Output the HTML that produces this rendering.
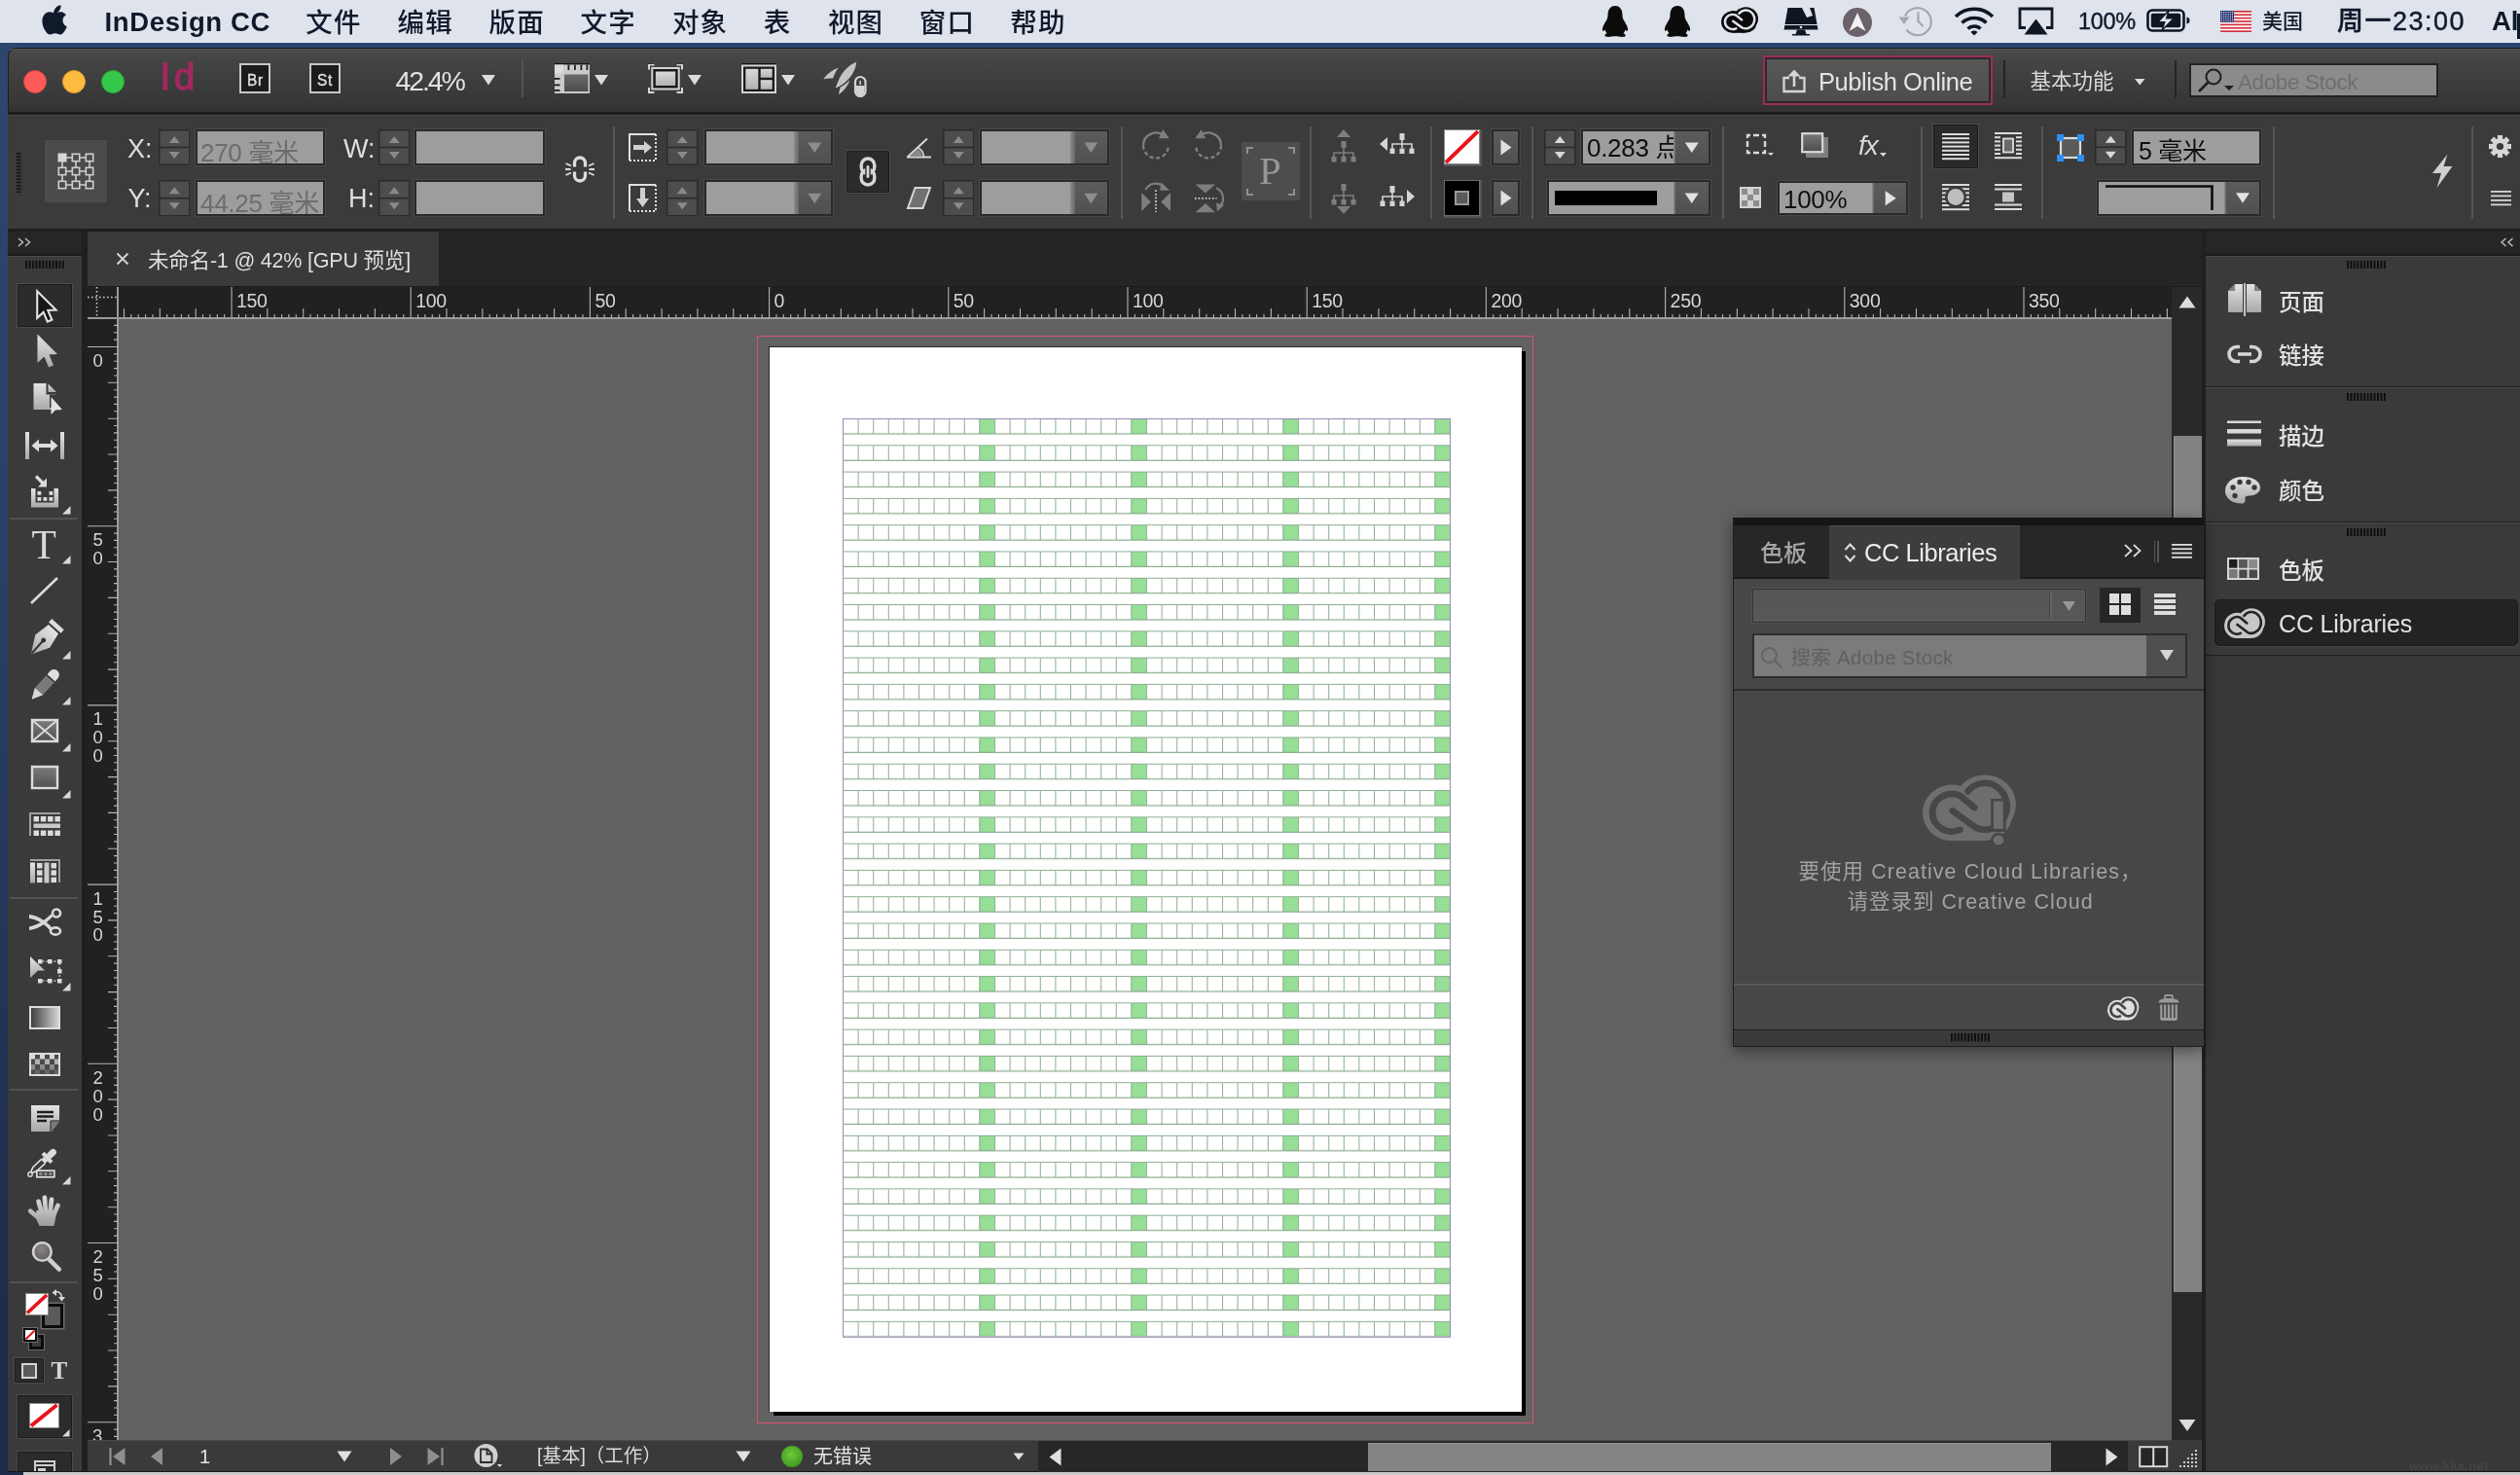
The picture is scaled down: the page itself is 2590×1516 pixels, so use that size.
<!DOCTYPE html>
<html lang="zh"><head><meta charset="utf-8"><title>InDesign CC</title>
<style>
html,body{margin:0;padding:0;}
body{width:2590px;height:1516px;overflow:hidden;position:relative;background:#2e4872;font-family:"Liberation Sans","Noto Sans CJK SC",sans-serif;}
div,svg{position:absolute;box-sizing:border-box;}
.t{white-space:nowrap;line-height:1;}
</style></head><body><div id="root" style="left:0;top:0;width:2590px;height:1516px;will-change:transform;">
<div style="left:0px;top:0px;width:2590px;height:44px;background:#dfe3ec;"></div>
<div style="left:0px;top:44px;width:2590px;height:6px;background:#2c446d;"></div>
<div style="left:0px;top:44px;width:24px;height:1472px;background:linear-gradient(#2d4670,#2a426b 30%,#1d2c49 90%);"></div>
<div style="left:24px;top:1513.3px;width:2566px;height:2.7px;background:#c9c9c9;"></div>
<div style="left:8px;top:49px;width:2592px;height:1464.3px;background:#3a3a3a;border-radius:9px 0 0 0;"></div>
<div style="left:8px;top:49px;width:2592px;height:68px;background:linear-gradient(#4c4c4c,#454545 15%,#363636 85%,#323232);border-radius:9px 0 0 0;border-top:1px solid #1d1d1d;border-left:1px solid #1d1d1d;"></div>
<div style="left:9px;top:50px;width:2591px;height:2px;background:linear-gradient(#5a5a5a,#4c4c4c);border-radius:9px 0 0 0;opacity:.6"></div>
<div style="left:8px;top:115px;width:2592px;height:3px;background:#1c1c1c;"></div>
<div style="left:8px;top:118px;width:2592px;height:1px;background:#4a4a4a;"></div>
<div style="left:8px;top:119px;width:2592px;height:117px;background:#3b3b3b;"></div>
<div style="left:8px;top:235px;width:2592px;height:3px;background:#1e1e1e;"></div>
<div style="left:8px;top:238px;width:2592px;height:57px;background:#282828;"></div>
<svg style="left:42px;top:4px;" width="27" height="33" viewBox="0 0 27 33"><path d="M18.6 7.3c1.3-1.6 2.2-3.8 1.9-6C18.600 1.400 16.400 2.600 15.100 4.200c-1.200 1.400-2.300 3.700-2 5.800 2.100.2 4.200-1.100 5.500-2.700zM22.500 17.300c0-4 3.300-5.900 3.400-6-1.900-2.700-4.700-3.100-5.700-3.100-2.400-.2-4.700 1.400-6 1.400-1.200 0-3.100-1.400-5.100-1.300-2.600 0-5 1.500-6.400 3.900-2.700 4.700-.7 11.700 2 15.500 1.300 1.900 2.800 4 4.900 3.900 2-.1 2.700-1.300 5.100-1.300 2.400 0 3 1.300 5.100 1.200 2.100 0 3.500-1.900 4.800-3.800 1.500-2.200 2.100-4.300 2.200-4.400-.1 0-4.200-1.600-4.300-6z" fill="#101a2b"/></svg>
<div class="t" style="left:107.5px;top:8.5px;font-size:27.5px;color:#101a2b;font-weight:bold;letter-spacing:0.65px;">InDesign CC</div>
<div class="t" style="left:314.2px;top:9.5px;font-size:27.5px;color:#101a2b;font-weight:500;letter-spacing:1.2px;">文件</div>
<div class="t" style="left:408.5px;top:9.5px;font-size:27.5px;color:#101a2b;font-weight:500;letter-spacing:1.2px;">编辑</div>
<div class="t" style="left:502.5px;top:9.5px;font-size:27.5px;color:#101a2b;font-weight:500;letter-spacing:1.2px;">版面</div>
<div class="t" style="left:596.5px;top:9.5px;font-size:27.5px;color:#101a2b;font-weight:500;letter-spacing:1.2px;">文字</div>
<div class="t" style="left:690.9px;top:9.5px;font-size:27.5px;color:#101a2b;font-weight:500;letter-spacing:1.2px;">对象</div>
<div class="t" style="left:784.8px;top:9.5px;font-size:27.5px;color:#101a2b;font-weight:500;letter-spacing:1.2px;">表</div>
<div class="t" style="left:850.9px;top:9.5px;font-size:27.5px;color:#101a2b;font-weight:500;letter-spacing:1.2px;">视图</div>
<div class="t" style="left:944.8px;top:9.5px;font-size:27.5px;color:#101a2b;font-weight:500;letter-spacing:1.2px;">窗口</div>
<div class="t" style="left:1038.2px;top:9.5px;font-size:27.5px;color:#101a2b;font-weight:500;letter-spacing:1.2px;">帮助</div>
<svg style="left:1646px;top:5px;" width="28" height="34" viewBox="0 0 28 34"><path d="M14 1C8.500 1 6.500 5.500 6.500 10.500c0 2-.3 3.500-1.500 5.500C3 19.500 .5 23 1 26c.3 1.500 1.500 1 2.500-.5.300 1.500 1 2.800 2 3.800C4 30 3 31 3.500 32c.5 1 4 1.200 7 .5 1.200-.3 2.300-.3 3.500-.3s2.300 0 3.500.3c3 .7 6.500.5 7-.5.500-1-.500-2-2-2.700 1-1 1.700-2.300 2-3.800 1 1.500 2.200 2 2.500.5.500-3-2-6.500-4-10-1.200-2-1.500-3.500-1.500-5.500C21.500 5.500 19.500 1 14 1z" fill="#0b0b0b"/></svg>
<svg style="left:1710px;top:5px;" width="28" height="34" viewBox="0 0 28 34"><path d="M14 1C8.500 1 6.500 5.500 6.500 10.500c0 2-.3 3.500-1.500 5.500C3 19.500 .5 23 1 26c.3 1.500 1.500 1 2.500-.5.300 1.500 1 2.800 2 3.800C4 30 3 31 3.500 32c.5 1 4 1.200 7 .5 1.200-.3 2.300-.3 3.500-.3s2.300 0 3.500.3c3 .7 6.500.5 7-.5.500-1-.500-2-2-2.700 1-1 1.700-2.300 2-3.800 1 1.500 2.200 2 2.500.5.500-3-2-6.500-4-10-1.200-2-1.500-3.500-1.500-5.500C21.500 5.500 19.500 1 14 1z" fill="#0b0b0b"/></svg>
<svg style="left:1769px;top:7.2px;overflow:visible;" width="38" height="26.8" viewBox="0 0 42 31.200" preserveAspectRatio="none"><g fill="#0b0b0b"><circle cx="13.200" cy="18" r="13.200"/><circle cx="28" cy="14.200" r="14"/><ellipse cx="27" cy="20" rx="13" ry="11.200"/><rect x="13.200" y="18" width="13.800" height="13.200"/></g><g fill="none" stroke="#dfe3ec" stroke-width="2.8" stroke-linecap="round" stroke-linejoin="round"><path d="M20.400 7.930A9.900 11 0 1 1 23.800 24.970L13.500 17.100"/><path d="M23.300 15.600L16.800 9.970A8.800 8.800 0 1 0 16.800 26.030"/></g></svg>
<svg style="left:1832px;top:7px;" width="38" height="30" viewBox="0 0 38 30"><path d="M5.500 1H32.500L36.500 23.500H1.500Z" fill="#0f1722"/><path d="M20 1H28L31 9 25 11Z" fill="#dfe3ec"/><path d="M1.500 18.500H36.500" stroke="#dfe3ec" stroke-width="1"/><circle cx="19" cy="21" r="1.300" fill="#dfe3ec"/><path d="M15 23.500H23L24.500 28H28V29.500H10V28H13.500Z" fill="#0f1722"/></svg>
<svg style="left:1893px;top:7px;" width="32" height="32" viewBox="0 0 32 32"><circle cx="16" cy="16" r="15" fill="#6a6268"/><path d="M16 6L24.500 25 16 20 7.500 25Z" fill="#f1f1f1"/></svg>
<svg style="left:1950px;top:4px;" width="36" height="34" viewBox="0 0 36 34"><g fill="none" stroke="#a3a8b0" stroke-width="2.200"><path d="M8 12.500A14 14 0 1 1 9.500 26.500"/><path d="M21.500 9V18L26 22.500" stroke-linecap="round"/></g><path d="M1.500 13.500H12.500L7 21Z" fill="#a3a8b0"/></svg>
<svg style="left:2008px;top:6px;" width="42" height="31" viewBox="0 0 42 31"><g fill="none" stroke="#0f1722" stroke-width="3.600" stroke-linecap="butt"><path d="M2 11A27 27 0 0 1 40 11"/><path d="M8.500 17.500A18 18 0 0 1 33.500 17.500"/><path d="M14.500 23.500A9.500 9.500 0 0 1 27.500 23.500"/></g><path d="M21 30.500L17.500 27A5 5 0 0 1 24.500 27Z" fill="#0f1722"/></svg>
<svg style="left:2074px;top:7px;" width="37" height="30" viewBox="0 0 37 30"><path d="M8 21.500H2V2H35V21.500H29" fill="none" stroke="#0f1722" stroke-width="2.800"/><path d="M18.500 12.500L30.500 28.500H6.500Z" fill="#0f1722"/></svg>
<div class="t" style="left:2136px;top:10.5px;font-size:23.5px;color:#101a2b;letter-spacing:-0.300px;-webkit-text-stroke:0.400px #101a2b;">100%</div>
<svg style="left:2206px;top:9px;" width="47" height="25" viewBox="0 0 47 25"><rect x="1.500" y="1.500" width="37" height="21" rx="4.500" fill="none" stroke="#0f1722" stroke-width="2.600"/><rect x="4.800" y="4.800" width="30.400" height="14.400" rx="2" fill="#0f1722"/><path d="M41.500 8.500V15.500C44 15 44.500 13.500 44.500 12S44 9 41.500 8.500Z" fill="#0f1722"/><path d="M23 2L12 13.500H19L16 22 28 10H20.500Z" fill="#dfe3ec" stroke="#0f1722" stroke-width="1.200"/></svg>
<svg style="left:2282px;top:11px;" width="32" height="22" viewBox="0 0 32 22"><rect width="32" height="22" fill="#fff"/><rect x="0" y="0" width="32" height="1.69231" fill="#d22f3c"/><rect x="0" y="3.38462" width="32" height="1.69231" fill="#d22f3c"/><rect x="0" y="6.76923" width="32" height="1.69231" fill="#d22f3c"/><rect x="0" y="10.1538" width="32" height="1.69231" fill="#d22f3c"/><rect x="0" y="13.5385" width="32" height="1.69231" fill="#d22f3c"/><rect x="0" y="16.9231" width="32" height="1.69231" fill="#d22f3c"/><rect x="0" y="20.3077" width="32" height="1.69231" fill="#d22f3c"/><rect width="14" height="11.850" fill="#2b3a78"/><rect x="1" y="1" width="1" height="1" fill="#fff"/><rect x="3.2" y="1" width="1" height="1" fill="#fff"/><rect x="5.4" y="1" width="1" height="1" fill="#fff"/><rect x="7.6" y="1" width="1" height="1" fill="#fff"/><rect x="9.8" y="1" width="1" height="1" fill="#fff"/><rect x="12" y="1" width="1" height="1" fill="#fff"/><rect x="1" y="3.2" width="1" height="1" fill="#fff"/><rect x="3.2" y="3.2" width="1" height="1" fill="#fff"/><rect x="5.4" y="3.2" width="1" height="1" fill="#fff"/><rect x="7.6" y="3.2" width="1" height="1" fill="#fff"/><rect x="9.8" y="3.2" width="1" height="1" fill="#fff"/><rect x="12" y="3.2" width="1" height="1" fill="#fff"/><rect x="1" y="5.4" width="1" height="1" fill="#fff"/><rect x="3.2" y="5.4" width="1" height="1" fill="#fff"/><rect x="5.4" y="5.4" width="1" height="1" fill="#fff"/><rect x="7.6" y="5.4" width="1" height="1" fill="#fff"/><rect x="9.8" y="5.4" width="1" height="1" fill="#fff"/><rect x="12" y="5.4" width="1" height="1" fill="#fff"/><rect x="1" y="7.6" width="1" height="1" fill="#fff"/><rect x="3.2" y="7.6" width="1" height="1" fill="#fff"/><rect x="5.4" y="7.6" width="1" height="1" fill="#fff"/><rect x="7.6" y="7.6" width="1" height="1" fill="#fff"/><rect x="9.8" y="7.6" width="1" height="1" fill="#fff"/><rect x="12" y="7.6" width="1" height="1" fill="#fff"/><rect x="1" y="9.8" width="1" height="1" fill="#fff"/><rect x="3.2" y="9.8" width="1" height="1" fill="#fff"/><rect x="5.4" y="9.8" width="1" height="1" fill="#fff"/><rect x="7.6" y="9.8" width="1" height="1" fill="#fff"/><rect x="9.8" y="9.8" width="1" height="1" fill="#fff"/><rect x="12" y="9.8" width="1" height="1" fill="#fff"/></svg>
<div class="t" style="left:2325px;top:11px;font-size:21px;color:#101a2b;font-weight:500;">美国</div>
<div class="t" style="left:2402px;top:9px;font-size:27px;color:#101a2b;font-weight:500;letter-spacing:1.500px;-webkit-text-stroke:0.400px #101a2b;">周一23:00</div>
<div class="t" style="left:2561px;top:8px;font-size:27.5px;color:#101a2b;font-weight:bold;">Al</div>
<div style="left:2587px;top:14px;width:3px;height:26px;background:#101a2b;"></div>
<div style="left:24px;top:72px;width:24px;height:24px;background:#fc5b57;border-radius:50%;border:1px solid #e0443e;"></div>
<div style="left:64px;top:72px;width:24px;height:24px;background:#fdbc40;border-radius:50%;border:1px solid #dfa023;"></div>
<div style="left:104px;top:72px;width:24px;height:24px;background:#34c84a;border-radius:50%;border:1px solid #27aa35;"></div>
<div class="t" style="left:164.6px;top:60px;font-size:38px;color:#a3285f;-webkit-text-stroke:1.300px #a3285f;letter-spacing:3.900px;">Id</div>
<div style="left:246px;top:65px;width:32px;height:31px;background:#1c1c1c;border:2px solid #c9c9c9;"></div>
<div class="t" style="left:253.8px;top:73.5px;font-size:16.5px;color:#dcdcdc;-webkit-text-stroke:0.500px #dcdcdc;letter-spacing:0.900px;transform-origin:0 0;transform:scaleX(0.930);">Br</div>
<div style="left:318px;top:65px;width:32px;height:31px;background:#1c1c1c;border:2px solid #c9c9c9;"></div>
<div class="t" style="left:325.8px;top:73.5px;font-size:16.5px;color:#dcdcdc;-webkit-text-stroke:0.500px #dcdcdc;letter-spacing:0.900px;transform-origin:0 0;transform:scaleX(0.930);">St</div>
<div class="t" style="left:406.5px;top:68.5px;font-size:28.5px;color:#e2e2e2;letter-spacing:-2.100px;">42.4%</div>
<svg style="left:495px;top:77px;" width="14" height="10.5" viewBox="0 0 14 10.5"><path d="M0 0H14 L7 10.5Z" fill="#dcdcdc"/></svg>
<div style="left:536px;top:60px;width:1.5px;height:40px;background:#545454;"></div>
<svg style="left:570px;top:64.5px;" width="36" height="31" viewBox="0 0 36 31"><defs><linearGradient id="gvo" x1="0" y1="0" x2="0" y2="1"><stop offset="0" stop-color="#6b6b6b"/><stop offset="1" stop-color="#4c4c4c"/></linearGradient><linearGradient id="glt" x1="0" y1="0" x2="0" y2="1"><stop offset="0" stop-color="#d9d9d9"/><stop offset="1" stop-color="#b2b2b2"/></linearGradient></defs><rect x="0" y="0" width="36" height="1.500" fill="#161616"/><rect x="0" y="1.500" width="36" height="29.500" fill="#cbcbcb"/><rect x="0" y="1.500" width="9" height="9" fill="#dcdcdc"/><rect x="10" y="11.500" width="24.500" height="17.500" fill="url(#gvo)"/><rect x="13.5" y="1.500" width="1.800" height="5.500" fill="#1c1c1c"/><rect x="20" y="1.500" width="1.800" height="5.500" fill="#1c1c1c"/><rect x="26.5" y="1.500" width="1.800" height="5.500" fill="#1c1c1c"/><rect x="32.5" y="1.500" width="1.800" height="5.500" fill="#1c1c1c"/><rect x="0" y="15" width="5.500" height="1.800" fill="#1c1c1c"/><rect x="0" y="21.5" width="5.500" height="1.800" fill="#1c1c1c"/><rect x="0" y="27" width="5.500" height="1.800" fill="#1c1c1c"/></svg>
<svg style="left:610.5px;top:77px;" width="14" height="10.5" viewBox="0 0 14 10.5"><path d="M0 0H14 L7 10.5Z" fill="#dcdcdc"/></svg>
<svg style="left:666px;top:64.5px;" width="36" height="31" viewBox="0 0 36 31"><path d="M1 6.500V1.500H6.500 M29.500 1.500H35V6.500 M35 25V30H29.500 M6.500 30H1V25" fill="none" stroke="#d6d6d6" stroke-width="2"/><path d="M0 0H6.500 M29.500 0H36" stroke="#161616" stroke-width="1.500"/><rect x="4.300" y="5" width="27.400" height="21.500" fill="#1a1a1a" stroke="#d4d4d4" stroke-width="2"/><rect x="7.800" y="8.500" width="20.400" height="14.500" fill="url(#glt)"/></svg>
<svg style="left:706.5px;top:77px;" width="14" height="10.5" viewBox="0 0 14 10.5"><path d="M0 0H14 L7 10.5Z" fill="#dcdcdc"/></svg>
<svg style="left:762px;top:64.5px;" width="36" height="31" viewBox="0 0 36 31"><rect x="0" y="0" width="36" height="1.500" fill="#161616"/><rect x="1" y="2.500" width="34" height="27.500" fill="#1a1a1a" stroke="#d4d4d4" stroke-width="2"/><rect x="4.300" y="5.800" width="13" height="21" fill="url(#glt)"/><rect x="19.700" y="5.800" width="12" height="9" fill="url(#glt)"/><rect x="19.700" y="17.200" width="12" height="9.600" fill="url(#glt)"/></svg>
<svg style="left:802.5px;top:77px;" width="14" height="10.5" viewBox="0 0 14 10.5"><path d="M0 0H14 L7 10.5Z" fill="#dcdcdc"/></svg>
<svg style="left:846px;top:63px;" width="46" height="38" viewBox="0 0 46 38"><g fill="#c4c4c4"><path d="M34.200 0.800C27 3 18.500 12 15.500 20.500 13.800 25 12.500 27 12.800 27.200 13.200 27.500 17 26 21 23 27.500 18 33.500 10 34.200 0.800Z"/><path d="M15.800 6.800C10 8.500 4 13 0.300 18.500 4 17.500 7.500 17.200 10 17.500 11.500 13.500 13.500 9.500 15.800 6.800Z"/><path d="M27.300 19.300C24.500 22.500 21 25 17.800 26.500 17 29 16.300 31.500 16 34.200 21 30.500 25.500 25.500 27.300 19.300Z"/></g><rect x="33" y="16" width="10.500" height="20" rx="5.250" fill="#3d3d3d" stroke="#d2d2d2" stroke-width="2.200"/><path d="M34 25H42.500V31A4.200 4.200 0 0 1 34 31Z" fill="#d2d2d2"/><path d="M38.200 20V24" stroke="#d2d2d2" stroke-width="1.600"/></svg>
<div style="left:1812px;top:56.5px;width:235.5px;height:51px;border:2px solid #9c2c5c;background:#2b2b2b;padding:0;"></div>
<div style="left:1815px;top:59.5px;width:229.5px;height:45px;background:linear-gradient(#575757,#4d4d4d);border:1px solid #2a2a2a;"></div>
<svg style="left:1831px;top:69.5px;" width="26" height="26" viewBox="0 0 26 26"><path d="M8 10H2.500V24H23.500V10H18" fill="none" stroke="#d6d6d6" stroke-width="2.300"/><path d="M13 19V4" stroke="#d6d6d6" stroke-width="2.600"/><path d="M6.500 8.500L13 1.500 19.500 8.500Z" fill="#d6d6d6"/></svg>
<div class="t" style="left:1869px;top:72px;font-size:25.5px;color:#e3e3e3;letter-spacing:-0.450px;">Publish Online</div>
<div style="left:2059px;top:62px;width:1.5px;height:39px;background:#242424;"></div>
<div class="t" style="left:2086.5px;top:74px;font-size:21.5px;color:#dcdcdc;">基本功能</div>
<svg style="left:2194px;top:81px;" width="10.5" height="6.5" viewBox="0 0 10.5 6.5"><path d="M0 0H10.5 L5.25 6.5Z" fill="#dcdcdc"/></svg>
<div style="left:2235px;top:62px;width:1.5px;height:39px;background:#242424;"></div>
<div style="left:2250px;top:64.5px;width:255.5px;height:35px;background:#8b8b8b;border:2px solid #232323;"></div>
<svg style="left:2258px;top:69px;" width="44" height="28" viewBox="0 0 44 28"><circle cx="17" cy="10" r="7.500" fill="none" stroke="#1e1e1e" stroke-width="2"/><path d="M11.500 15.500L2 25" stroke="#1e1e1e" stroke-width="2.600"/><path d="M28 19H38L33 24Z" fill="#1e1e1e"/></svg>
<div class="t" style="left:2300px;top:74px;font-size:22.5px;color:#6f6f6f;letter-spacing:-0.400px;">Adobe Stock</div>
<svg style="left:17px;top:157px;" width="5" height="41" viewBox="0 0 5 41"><rect x="0" y="0" width="4.500" height="1.600" fill="#121212"/><rect x="0" y="3.3" width="4.500" height="1.600" fill="#121212"/><rect x="0" y="6.6" width="4.500" height="1.600" fill="#121212"/><rect x="0" y="9.9" width="4.500" height="1.600" fill="#121212"/><rect x="0" y="13.2" width="4.500" height="1.600" fill="#121212"/><rect x="0" y="16.5" width="4.500" height="1.600" fill="#121212"/><rect x="0" y="19.8" width="4.500" height="1.600" fill="#121212"/><rect x="0" y="23.1" width="4.500" height="1.600" fill="#121212"/><rect x="0" y="26.4" width="4.500" height="1.600" fill="#121212"/><rect x="0" y="29.7" width="4.500" height="1.600" fill="#121212"/><rect x="0" y="33" width="4.500" height="1.600" fill="#121212"/><rect x="0" y="36.3" width="4.500" height="1.600" fill="#121212"/><rect x="0" y="39.6" width="4.500" height="1.600" fill="#121212"/></svg>
<svg style="left:46px;top:144px;" width="64" height="64" viewBox="0 0 64 64"><rect x="0" y="0" width="64" height="64" fill="#4b4b4b"/><path d="M18 18H46V46H18Z M32 18V46 M18 32H46" fill="none" stroke="#cfcfcf" stroke-width="1.600"/><rect x="13.5" y="13.5" width="9" height="9" fill="#d6d6d6"/><rect x="28.3" y="14.3" width="7.400" height="7.400" fill="#4b4b4b" stroke="#cfcfcf" stroke-width="1.600"/><rect x="42.3" y="14.3" width="7.400" height="7.400" fill="#4b4b4b" stroke="#cfcfcf" stroke-width="1.600"/><rect x="14.3" y="28.3" width="7.400" height="7.400" fill="#4b4b4b" stroke="#cfcfcf" stroke-width="1.600"/><rect x="28.3" y="28.3" width="7.400" height="7.400" fill="#4b4b4b" stroke="#cfcfcf" stroke-width="1.600"/><rect x="42.3" y="28.3" width="7.400" height="7.400" fill="#4b4b4b" stroke="#cfcfcf" stroke-width="1.600"/><rect x="14.3" y="42.3" width="7.400" height="7.400" fill="#4b4b4b" stroke="#cfcfcf" stroke-width="1.600"/><rect x="28.3" y="42.3" width="7.400" height="7.400" fill="#4b4b4b" stroke="#cfcfcf" stroke-width="1.600"/><rect x="42.3" y="42.3" width="7.400" height="7.400" fill="#4b4b4b" stroke="#cfcfcf" stroke-width="1.600"/></svg>
<div class="t" style="left:131px;top:139.5px;font-size:27px;color:#dedede;">X:</div>
<div class="t" style="left:131.5px;top:191px;font-size:27px;color:#dedede;">Y:</div>
<div class="t" style="left:353px;top:139.5px;font-size:27px;color:#dedede;">W:</div>
<div class="t" style="left:358px;top:191px;font-size:27px;color:#dedede;">H:</div>
<div style="left:162.5px;top:133px;width:32.5px;height:37px;"><svg style="left:0px;top:0px;" width="32.5" height="37" viewBox="0 0 32.5 37"><rect x="0" y="0" width="32.5" height="37" fill="#2b2b2b"/><rect x="1.500" y="1.500" width="29.5" height="16.2" fill="#4d4d4d"/><rect x="1.500" y="19.3" width="29.5" height="16.2" fill="#4d4d4d"/><path d="M16.25 7L21.75 14H10.75Z" fill="#8a8a8a"/><path d="M16.25 30L21.75 23H10.75Z" fill="#8a8a8a"/></svg></div>
<div style="left:200.5px;top:133px;width:133.5px;height:37px;background:#9d9d9d;border:2px solid #2a2a2a;box-shadow:0 0 0 1px #484848;overflow:hidden;"><div class="t" style="left:3.5px;top:9px;font-size:26px;color:#6c6c6c;letter-spacing:-0.3px;">270 毫米</div></div>
<div style="left:388.5px;top:133px;width:32.5px;height:37px;"><svg style="left:0px;top:0px;" width="32.5" height="37" viewBox="0 0 32.5 37"><rect x="0" y="0" width="32.5" height="37" fill="#2b2b2b"/><rect x="1.500" y="1.500" width="29.5" height="16.2" fill="#4d4d4d"/><rect x="1.500" y="19.3" width="29.5" height="16.2" fill="#4d4d4d"/><path d="M16.25 7L21.75 14H10.75Z" fill="#8a8a8a"/><path d="M16.25 30L21.75 23H10.75Z" fill="#8a8a8a"/></svg></div>
<div style="left:425.5px;top:133px;width:134.5px;height:37px;background:#9d9d9d;border:2px solid #2a2a2a;box-shadow:0 0 0 1px #484848;overflow:hidden;"></div>
<div style="left:162.5px;top:184.5px;width:32.5px;height:37.5px;"><svg style="left:0px;top:0px;" width="32.5" height="37.5" viewBox="0 0 32.5 37.5"><rect x="0" y="0" width="32.5" height="37.5" fill="#2b2b2b"/><rect x="1.500" y="1.500" width="29.5" height="16.45" fill="#4d4d4d"/><rect x="1.500" y="19.55" width="29.5" height="16.45" fill="#4d4d4d"/><path d="M16.25 7.25L21.75 14.25H10.75Z" fill="#8a8a8a"/><path d="M16.25 30.25L21.75 23.25H10.75Z" fill="#8a8a8a"/></svg></div>
<div style="left:200.5px;top:184.5px;width:133.5px;height:37.5px;background:#9d9d9d;border:2px solid #2a2a2a;box-shadow:0 0 0 1px #484848;overflow:hidden;"><div class="t" style="left:3.5px;top:9px;font-size:26px;color:#6c6c6c;letter-spacing:-0.3px;">44.25 毫米</div></div>
<div style="left:388.5px;top:184.5px;width:32.5px;height:37.5px;"><svg style="left:0px;top:0px;" width="32.5" height="37.5" viewBox="0 0 32.5 37.5"><rect x="0" y="0" width="32.5" height="37.5" fill="#2b2b2b"/><rect x="1.500" y="1.500" width="29.5" height="16.45" fill="#4d4d4d"/><rect x="1.500" y="19.55" width="29.5" height="16.45" fill="#4d4d4d"/><path d="M16.25 7.25L21.75 14.25H10.75Z" fill="#8a8a8a"/><path d="M16.25 30.25L21.75 23.25H10.75Z" fill="#8a8a8a"/></svg></div>
<div style="left:425.5px;top:184.5px;width:134.5px;height:37.5px;background:#9d9d9d;border:2px solid #2a2a2a;box-shadow:0 0 0 1px #484848;overflow:hidden;"></div>
<svg style="left:581px;top:158px;" width="30" height="32" viewBox="0 0 30 32"><g fill="none" stroke="#dedede" stroke-width="3.300"><path d="M9.500 13.500V9.500A5.500 5.500 0 0 1 20.500 9.500V13.500"/><path d="M9.500 18.500V22.500A5.500 5.500 0 0 0 20.500 22.500V18.500"/></g><g stroke="#dedede" stroke-width="1.800"><path d="M0.500 10L6 12.500 M0 16H5.500 M0.500 22L6 19.500 M29.500 10L24 12.500 M30 16H24.500 M29.500 22L24 19.500"/></g></svg>
<div style="left:629.5px;top:129.5px;width:2px;height:95px;background:#555555;"></div>
<svg style="left:645.5px;top:137px;" width="30" height="30" viewBox="0 0 30 30"><path d="M1 28V1H28" fill="none" stroke="#e0e0e0" stroke-width="2"/><path d="M1 28H29 M28 1V29" fill="none" stroke="#e0e0e0" stroke-width="2" stroke-dasharray="2 2"/><path d="M5 12H16V8L24 14.500 16 21V17H5Z" fill="#d0d0d0"/></svg>
<svg style="left:645.5px;top:189px;" width="30" height="30" viewBox="0 0 30 30"><path d="M1 28V1H28" fill="none" stroke="#e0e0e0" stroke-width="2"/><path d="M1 28H29 M28 1V29" fill="none" stroke="#e0e0e0" stroke-width="2" stroke-dasharray="2 2"/><path d="M12 4V15H8L14.500 24 21 15H17V4Z" fill="#d0d0d0"/></svg>
<div style="left:685px;top:133px;width:32.5px;height:37px;"><svg style="left:0px;top:0px;" width="32.5" height="37" viewBox="0 0 32.5 37"><rect x="0" y="0" width="32.5" height="37" fill="#2b2b2b"/><rect x="1.500" y="1.500" width="29.5" height="16.2" fill="#4d4d4d"/><rect x="1.500" y="19.3" width="29.5" height="16.2" fill="#4d4d4d"/><path d="M16.25 7L21.75 14H10.75Z" fill="#8a8a8a"/><path d="M16.25 30L21.75 23H10.75Z" fill="#8a8a8a"/></svg></div>
<div style="left:723.5px;top:133px;width:132px;height:37px;background:#9d9d9d;border:2px solid #2a2a2a;box-shadow:0 0 0 1px #484848;overflow:hidden;"></div><div style="left:816px;top:135px;width:5px;height:33px;background:linear-gradient(90deg,#8c8c8c,#666666);"></div><div style="left:821px;top:135px;width:32.5px;height:33px;background:linear-gradient(#5c5c5c,#505050);"><svg style="left:0px;top:0px;" width="32.5" height="33" viewBox="0 0 32.5 33"><path d="M9.25 11.5H23.25L16.25 22Z" fill="#8d8d8d"/></svg></div>
<div style="left:968.5px;top:133px;width:32.5px;height:37px;"><svg style="left:0px;top:0px;" width="32.5" height="37" viewBox="0 0 32.5 37"><rect x="0" y="0" width="32.5" height="37" fill="#2b2b2b"/><rect x="1.500" y="1.500" width="29.5" height="16.2" fill="#4d4d4d"/><rect x="1.500" y="19.3" width="29.5" height="16.2" fill="#4d4d4d"/><path d="M16.25 7L21.75 14H10.75Z" fill="#8a8a8a"/><path d="M16.25 30L21.75 23H10.75Z" fill="#8a8a8a"/></svg></div>
<div style="left:1007px;top:133px;width:132.5px;height:37px;background:#9d9d9d;border:2px solid #2a2a2a;box-shadow:0 0 0 1px #484848;overflow:hidden;"></div><div style="left:1100px;top:135px;width:5px;height:33px;background:linear-gradient(90deg,#8c8c8c,#666666);"></div><div style="left:1105px;top:135px;width:32.5px;height:33px;background:linear-gradient(#5c5c5c,#505050);"><svg style="left:0px;top:0px;" width="32.5" height="33" viewBox="0 0 32.5 33"><path d="M9.25 11.5H23.25L16.25 22Z" fill="#8d8d8d"/></svg></div>
<div style="left:685px;top:184.5px;width:32.5px;height:37.5px;"><svg style="left:0px;top:0px;" width="32.5" height="37.5" viewBox="0 0 32.5 37.5"><rect x="0" y="0" width="32.5" height="37.5" fill="#2b2b2b"/><rect x="1.500" y="1.500" width="29.5" height="16.45" fill="#4d4d4d"/><rect x="1.500" y="19.55" width="29.5" height="16.45" fill="#4d4d4d"/><path d="M16.25 7.25L21.75 14.25H10.75Z" fill="#8a8a8a"/><path d="M16.25 30.25L21.75 23.25H10.75Z" fill="#8a8a8a"/></svg></div>
<div style="left:723.5px;top:184.5px;width:132px;height:37.5px;background:#9d9d9d;border:2px solid #2a2a2a;box-shadow:0 0 0 1px #484848;overflow:hidden;"></div><div style="left:816px;top:186.5px;width:5px;height:33.5px;background:linear-gradient(90deg,#8c8c8c,#666666);"></div><div style="left:821px;top:186.5px;width:32.5px;height:33.5px;background:linear-gradient(#5c5c5c,#505050);"><svg style="left:0px;top:0px;" width="32.5" height="33.5" viewBox="0 0 32.5 33.5"><path d="M9.25 11.75H23.25L16.25 22.25Z" fill="#8d8d8d"/></svg></div>
<div style="left:968.5px;top:184.5px;width:32.5px;height:37.5px;"><svg style="left:0px;top:0px;" width="32.5" height="37.5" viewBox="0 0 32.5 37.5"><rect x="0" y="0" width="32.5" height="37.5" fill="#2b2b2b"/><rect x="1.500" y="1.500" width="29.5" height="16.45" fill="#4d4d4d"/><rect x="1.500" y="19.55" width="29.5" height="16.45" fill="#4d4d4d"/><path d="M16.25 7.25L21.75 14.25H10.75Z" fill="#8a8a8a"/><path d="M16.25 30.25L21.75 23.25H10.75Z" fill="#8a8a8a"/></svg></div>
<div style="left:1007px;top:184.5px;width:132.5px;height:37.5px;background:#9d9d9d;border:2px solid #2a2a2a;box-shadow:0 0 0 1px #484848;overflow:hidden;"></div><div style="left:1100px;top:186.5px;width:5px;height:33.5px;background:linear-gradient(90deg,#8c8c8c,#666666);"></div><div style="left:1105px;top:186.5px;width:32.5px;height:33.5px;background:linear-gradient(#5c5c5c,#505050);"><svg style="left:0px;top:0px;" width="32.5" height="33.5" viewBox="0 0 32.5 33.5"><path d="M9.25 11.75H23.25L16.25 22.25Z" fill="#8d8d8d"/></svg></div>
<div style="left:870px;top:154.5px;width:44px;height:43.5px;background:#2b2b2b;border:1.500px solid #1c1c1c;box-shadow:0 0 0 1px #4a4a4a;"></div>
<svg style="left:882px;top:161px;" width="20" height="31" viewBox="0 0 20 31"><g fill="none" stroke="#d8d8d8" stroke-width="3.400"><rect x="3.200" y="2" width="13.600" height="15.500" rx="6.800"/><rect x="3.200" y="13.500" width="13.600" height="15.500" rx="6.800"/></g><path d="M10 9V22" stroke="#2b2b2b" stroke-width="5.500"/><path d="M10 10.500V20.500" stroke="#d8d8d8" stroke-width="2.800" stroke-linecap="round"/></svg>
<svg style="left:931px;top:141px;" width="27" height="22" viewBox="0 0 27 22"><path d="M1 20.500H26 M1.500 20.500L22 1.500" fill="none" stroke="#d6d6d6" stroke-width="2"/><path d="M12 10.500A12 12 0 0 1 18.500 20" fill="none" stroke="#d6d6d6" stroke-width="1.600"/><path d="M4 19.500L12 12A11 11 0 0 1 17 19.500Z" fill="#8a8a8a"/></svg>
<svg style="left:931px;top:191px;" width="27" height="25" viewBox="0 0 27 25"><path d="M9.500 2H25L17.500 23H2Z" fill="#707070" stroke="#d6d6d6" stroke-width="2"/></svg>
<div style="left:1152px;top:129.5px;width:2px;height:95px;background:#555555;"></div>
<svg style="left:1171px;top:132px;" width="36" height="36" viewBox="0 0 36 36"><path d="M4 17.500A13 13 0 0 1 26 8.200" fill="none" stroke="#7e7e7e" stroke-width="2.400"/><path d="M4 17.500A13 13 0 0 0 30 17.500" fill="none" stroke="#7e7e7e" stroke-width="2.400" stroke-dasharray="4.200 2.600"/><path d="M19.900 10.300H30.700L24.200 1.100Z" fill="#7e7e7e"/></svg>
<svg style="left:1225.3px;top:132px;" width="36" height="36" viewBox="0 0 36 36"><g transform="translate(34 0) scale(-1 1)"><path d="M4 17.500A13 13 0 0 1 26 8.200" fill="none" stroke="#7e7e7e" stroke-width="2.400"/><path d="M4 17.500A13 13 0 0 0 30 17.500" fill="none" stroke="#7e7e7e" stroke-width="2.400" stroke-dasharray="4.200 2.600"/><path d="M19.900 10.300H30.700L24.200 1.100Z" fill="#7e7e7e"/></g></svg>
<svg style="left:1171px;top:186px;" width="36" height="36" viewBox="0 0 36 36"><path d="M2.300 11.900V30.900L11.700 21.500Z M32 11.900V30.900L22.200 21.500Z" fill="#7e7e7e"/><path d="M17 9.300V32" stroke="#c8c8c8" stroke-width="1.800" stroke-dasharray="1.800 1.800"/><path d="M6.500 9A11.500 11.500 0 0 1 24.500 5.500" fill="none" stroke="#7e7e7e" stroke-width="2.200"/><path d="M22.500 1.500L31 9.800H21.200Z" fill="#7e7e7e"/></svg>
<svg style="left:1224px;top:186px;" width="36" height="36" viewBox="0 0 36 36"><path d="M4.600 3.400H24.900L15 12.600Z M4.600 32.200H24.900L15 23Z" fill="#7e7e7e"/><path d="M3.900 17.800H26.500" stroke="#c8c8c8" stroke-width="1.800" stroke-dasharray="1.800 1.800"/><path d="M26.200 7.300A11.500 11.500 0 0 1 31 24.500" fill="none" stroke="#7e7e7e" stroke-width="2.200"/><path d="M26 22.500L34.200 24.800 27 31.500Z" fill="#7e7e7e"/></svg>
<div style="left:1276px;top:146px;width:60px;height:60px;background:#4d4d4d;"></div>
<svg style="left:1276px;top:146px;" width="60" height="60" viewBox="0 0 60 60"><path d="M6 12V6H12 M48 6H54V12 M54 48V54H48 M12 54H6V48" fill="none" stroke="#909090" stroke-width="2"/></svg>
<div class="t" style="left:1294px;top:155px;font-size:41px;color:#979797;font-family:'Liberation Serif',serif;">P</div>
<div style="left:1346px;top:129.5px;width:2px;height:95px;background:#555555;"></div>
<svg style="left:1368px;top:133px;" width="26" height="34" viewBox="0 0 26 34"><g fill="none" stroke="#7e7e7e" stroke-width="1.600"><path d="M13 19V29 M3 29V24H23V29"/></g><rect x="10.500" y="12" width="5" height="7" fill="#7e7e7e"/><rect x="0.5" y="28" width="5" height="5.500" fill="#7e7e7e"/><rect x="10.5" y="28" width="5" height="5.500" fill="#7e7e7e"/><rect x="20.5" y="28" width="5" height="5.500" fill="#7e7e7e"/><path d="M13 0L20 8H6Z" fill="#7e7e7e"/></svg>
<svg style="left:1368px;top:187px;" width="26" height="34" viewBox="0 0 26 34"><g fill="none" stroke="#7e7e7e" stroke-width="1.600"><path d="M13 9V19 M3 19V14H23V19"/></g><rect x="10.500" y="2" width="5" height="7" fill="#7e7e7e"/><rect x="0.5" y="18" width="5" height="5.500" fill="#7e7e7e"/><rect x="10.5" y="18" width="5" height="5.500" fill="#7e7e7e"/><rect x="20.5" y="18" width="5" height="5.500" fill="#7e7e7e"/><path d="M13 33L20 25H6Z" fill="#7e7e7e"/></svg>
<svg style="left:1418px;top:136px;" width="36" height="24" viewBox="0 0 36 24"><g fill="none" stroke="#d4d4d4" stroke-width="1.600"><path d="M23 8V16 M13 18V12H33V18"/></g><rect x="20.5" y="1" width="5" height="7" fill="#d4d4d4"/><rect x="10.5" y="16.500" width="5" height="5.500" fill="#d4d4d4"/><rect x="20.5" y="16.500" width="5" height="5.500" fill="#d4d4d4"/><rect x="30.5" y="16.500" width="5" height="5.500" fill="#d4d4d4"/><path d="M0 12L8 5V19Z" fill="#d4d4d4"/></svg>
<svg style="left:1418px;top:190px;" width="36" height="24" viewBox="0 0 36 24"><g fill="none" stroke="#d4d4d4" stroke-width="1.600"><path d="M13 8V16 M3 18V12H23V18"/></g><rect x="10.5" y="1" width="5" height="7" fill="#d4d4d4"/><rect x="0.5" y="16.500" width="5" height="5.500" fill="#d4d4d4"/><rect x="10.5" y="16.500" width="5" height="5.500" fill="#d4d4d4"/><rect x="20.5" y="16.500" width="5" height="5.500" fill="#d4d4d4"/><path d="M36 12L28 5V19Z" fill="#d4d4d4"/></svg>
<div style="left:1469.5px;top:129.5px;width:2px;height:95px;background:#555555;"></div>
<div style="left:1484px;top:132.5px;width:37px;height:36.5px;background:#fff;border:1.500px solid #8a8a8a;box-shadow:1px 1px 0 1px #555;"></div>
<svg style="left:1485px;top:133.5px;" width="35" height="34" viewBox="0 0 35 34"><path d="M1 33L34 1" stroke="#e8121c" stroke-width="4"/></svg>
<div style="left:1484px;top:185px;width:37px;height:36.5px;background:#000;border:1.500px solid #6a6a6a;box-shadow:1px 1px 0 1px #555;"></div>
<div style="left:1495px;top:196px;width:15px;height:15px;background:#595959;border:2px solid #9a9a9a;"></div>
<div style="left:1532.5px;top:133px;width:29.5px;height:36.5px;background:linear-gradient(#5c5c5c,#505050);border:2px solid #2a2a2a;box-shadow:0 0 0 1px #484848;"></div>
<svg style="left:1541.5px;top:143px;" width="12" height="17" viewBox="0 0 12 17"><path d="M0.500 0.500V16.500L11.500 8.500Z" fill="#e0e0e0"/></svg>
<div style="left:1532.5px;top:185px;width:29.5px;height:36.5px;background:linear-gradient(#5c5c5c,#505050);border:2px solid #2a2a2a;box-shadow:0 0 0 1px #484848;"></div>
<svg style="left:1541.5px;top:195px;" width="12" height="17" viewBox="0 0 12 17"><path d="M0.500 0.500V16.500L11.500 8.500Z" fill="#e0e0e0"/></svg>
<div style="left:1574px;top:129.5px;width:2px;height:95px;background:#555555;"></div>
<div style="left:1587px;top:133px;width:32.5px;height:37px;"><svg style="left:0px;top:0px;" width="32.5" height="37" viewBox="0 0 32.5 37"><rect x="0" y="0" width="32.5" height="37" fill="#2b2b2b"/><rect x="1.500" y="1.500" width="29.5" height="16.2" fill="#4d4d4d"/><rect x="1.500" y="19.3" width="29.5" height="16.2" fill="#4d4d4d"/><path d="M16.25 7L21.75 14H10.75Z" fill="#d8d8d8"/><path d="M16.25 30L21.75 23H10.75Z" fill="#d8d8d8"/></svg></div>
<div style="left:1625px;top:133px;width:132.5px;height:37px;background:#9d9d9d;border:2px solid #2a2a2a;box-shadow:0 0 0 1px #484848;overflow:hidden;"><div class="t" style="left:4px;top:3.5px;font-size:26px;color:#0e0e0e;letter-spacing:-0.3px;">0.283 点</div></div><div style="left:1720px;top:135px;width:2px;height:33px;background:linear-gradient(90deg,#8c8c8c,#666666);"></div><div style="left:1722px;top:135px;width:33.5px;height:33px;background:linear-gradient(#5c5c5c,#505050);"><svg style="left:0px;top:0px;" width="33.5" height="33" viewBox="0 0 33.5 33"><path d="M9.75 11.5H23.75L16.75 22Z" fill="#e2e2e2"/></svg></div>
<div style="left:1589.5px;top:185px;width:168px;height:37px;background:#9d9d9d;border:2px solid #2a2a2a;box-shadow:0 0 0 1px #484848;overflow:hidden;"></div><div style="left:1720px;top:187px;width:2px;height:33px;background:linear-gradient(90deg,#8c8c8c,#666666);"></div><div style="left:1722px;top:187px;width:33.5px;height:33px;background:linear-gradient(#5c5c5c,#505050);"><svg style="left:0px;top:0px;" width="33.5" height="33" viewBox="0 0 33.5 33"><path d="M9.75 11.5H23.75L16.75 22Z" fill="#e2e2e2"/></svg></div>
<div style="left:1597.5px;top:196px;width:105.5px;height:15px;background:#000;"></div>
<div style="left:1770px;top:129.5px;width:2px;height:95px;background:#555555;"></div>
<svg style="left:1794px;top:137px;" width="30" height="24" viewBox="0 0 30 24"><path d="M2 5V2H5 M8 2H14 M17 2H20V5 M20 8V14 M20 17V20H17 M14 20H8 M5 20H2V17 M2 14V8" fill="none" stroke="#d8d8d8" stroke-width="2.400"/><path d="M23 20H29L26 23Z" fill="#d8d8d8"/></svg>
<svg style="left:1851px;top:136px;" width="30" height="27" viewBox="0 0 30 27"><defs><linearGradient id="gds" x1="0" y1="0" x2="0" y2="1"><stop offset="0" stop-color="#7a7a7a"/><stop offset="1" stop-color="#4c4c4c"/></linearGradient></defs><rect x="5" y="5" width="23" height="21" fill="#7f7f7f"/><rect x="1.200" y="1.200" width="21" height="19" fill="url(#gds)" stroke="#d8d8d8" stroke-width="2.200"/></svg>
<div class="t" style="left:1910px;top:135.5px;font-size:28px;color:#d8d8d8;font-style:italic;letter-spacing:-1px;">fx</div>
<svg style="left:1932px;top:157px;" width="8" height="5" viewBox="0 0 8 5"><path d="M0 0H7L3.500 4Z" fill="#d8d8d8"/></svg>
<svg style="left:1788px;top:192px;" width="22" height="22" viewBox="0 0 22 22"><rect width="22" height="22" fill="#d2d2d2"/><rect x="2" y="2" width="6" height="6" fill="#8c8c8c"/><rect x="14" y="2" width="6" height="6" fill="#8c8c8c"/><rect x="8" y="8" width="6" height="6" fill="#8c8c8c"/><rect x="2" y="14" width="6" height="6" fill="#8c8c8c"/><rect x="14" y="14" width="6" height="6" fill="#8c8c8c"/></svg>
<div style="left:1827px;top:185.5px;width:134px;height:35.5px;background:#9d9d9d;border:2px solid #2a2a2a;box-shadow:0 0 0 1px #484848;overflow:hidden;"><div class="t" style="left:4px;top:4px;font-size:26px;color:#0e0e0e;letter-spacing:-0.3px;">100%</div></div><div style="left:1923.5px;top:187.5px;width:2px;height:31.5px;background:linear-gradient(90deg,#8c8c8c,#666666);"></div><div style="left:1925.5px;top:187.5px;width:33.5px;height:31.5px;background:linear-gradient(#5c5c5c,#505050);"><svg style="left:0px;top:0px;" width="33.5" height="31.5" viewBox="0 0 33.5 31.5"><path d="M11.75 8.25V23.25L22.75 15.75Z" fill="#e2e2e2"/></svg></div>
<div style="left:1974px;top:129.5px;width:2px;height:95px;background:#555555;"></div>
<div style="left:1987px;top:128px;width:46px;height:45px;background:#2a2a2a;border:1.500px solid #1c1c1c;box-shadow:0 0 0 1px #4a4a4a;"></div>
<svg style="left:1996px;top:136.5px;" width="28" height="28" viewBox="0 0 28 28"><rect x="0" y="0" width="28" height="2" fill="#dcdcdc"/><rect x="0" y="4.2" width="28" height="2" fill="#dcdcdc"/><rect x="0" y="8.4" width="28" height="2" fill="#dcdcdc"/><rect x="0" y="12.6" width="28" height="2" fill="#dcdcdc"/><rect x="0" y="16.8" width="28" height="2" fill="#dcdcdc"/><rect x="0" y="21" width="28" height="2" fill="#dcdcdc"/><rect x="0" y="25.2" width="28" height="2" fill="#dcdcdc"/></svg>
<svg style="left:2050px;top:135.5px;" width="28" height="28" viewBox="0 0 28 28"><rect x="0" y="0" width="28" height="2" fill="#dcdcdc"/><rect x="0" y="4.2" width="28" height="2" fill="#dcdcdc"/><rect x="0" y="8.4" width="28" height="2" fill="#dcdcdc"/><rect x="0" y="12.6" width="28" height="2" fill="#dcdcdc"/><rect x="0" y="16.8" width="28" height="2" fill="#dcdcdc"/><rect x="0" y="21" width="28" height="2" fill="#dcdcdc"/><rect x="0" y="25.2" width="28" height="2" fill="#dcdcdc"/><rect x="6" y="3.500" width="16" height="20" fill="#3b3b3b"/><rect x="9" y="6.500" width="10" height="14" fill="#6a6a6a" stroke="#dcdcdc" stroke-width="1.800"/></svg>
<svg style="left:1996px;top:189px;" width="28" height="28" viewBox="0 0 28 28"><rect x="0" y="0" width="28" height="2" fill="#dcdcdc"/><rect x="0" y="4.2" width="28" height="2" fill="#dcdcdc"/><rect x="0" y="8.4" width="28" height="2" fill="#dcdcdc"/><rect x="0" y="12.6" width="28" height="2" fill="#dcdcdc"/><rect x="0" y="16.8" width="28" height="2" fill="#dcdcdc"/><rect x="0" y="21" width="28" height="2" fill="#dcdcdc"/><rect x="0" y="25.2" width="28" height="2" fill="#dcdcdc"/><circle cx="14" cy="13.500" r="11" fill="#3b3b3b"/><circle cx="14" cy="13.500" r="8.500" fill="#bdbdbd"/></svg>
<svg style="left:2050px;top:189px;" width="28" height="28" viewBox="0 0 28 28"><rect x="0" y="0" width="28" height="2" fill="#dcdcdc"/><rect x="0" y="4.500" width="28" height="2" fill="#dcdcdc"/><rect x="0" y="20.500" width="28" height="2" fill="#dcdcdc"/><rect x="0" y="25" width="28" height="2" fill="#dcdcdc"/><rect x="8" y="8.500" width="12" height="10" fill="#c4c4c4"/></svg>
<div style="left:2097.5px;top:129.5px;width:2px;height:95px;background:#555555;"></div>
<svg style="left:2114px;top:138px;" width="28" height="28" viewBox="0 0 28 28"><rect x="4" y="4" width="20" height="20" fill="#5a5a5a" stroke="#dcdcdc" stroke-width="2.200"/><rect x="0" y="0" width="7" height="7" fill="#2f8ff5"/><rect x="21" y="0" width="7" height="7" fill="#2f8ff5"/><rect x="0" y="21" width="7" height="7" fill="#2f8ff5"/><rect x="21" y="21" width="7" height="7" fill="#2f8ff5"/></svg>
<div style="left:2153px;top:133px;width:32.5px;height:36.5px;"><svg style="left:0px;top:0px;" width="32.5" height="36.5" viewBox="0 0 32.5 36.5"><rect x="0" y="0" width="32.5" height="36.5" fill="#2b2b2b"/><rect x="1.500" y="1.500" width="29.5" height="15.95" fill="#4d4d4d"/><rect x="1.500" y="19.05" width="29.5" height="15.95" fill="#4d4d4d"/><path d="M16.25 6.75L21.75 13.75H10.75Z" fill="#d8d8d8"/><path d="M16.25 29.75L21.75 22.75H10.75Z" fill="#d8d8d8"/></svg></div>
<div style="left:2191px;top:133px;width:133px;height:36.5px;background:#9d9d9d;border:2px solid #2a2a2a;box-shadow:0 0 0 1px #484848;overflow:hidden;"><div class="t" style="left:5px;top:8px;font-size:25px;color:#0e0e0e;letter-spacing:-0.3px;">5 毫米</div></div>
<div style="left:2154.5px;top:185px;width:169.5px;height:36.5px;background:#9d9d9d;border:2px solid #2a2a2a;box-shadow:0 0 0 1px #484848;overflow:hidden;"></div><div style="left:2286px;top:187px;width:2px;height:32.5px;background:linear-gradient(90deg,#8c8c8c,#666666);"></div><div style="left:2288px;top:187px;width:34px;height:32.5px;background:linear-gradient(#5c5c5c,#505050);"><svg style="left:0px;top:0px;" width="34" height="32.5" viewBox="0 0 34 32.5"><path d="M10 11.25H24L17 21.75Z" fill="#e2e2e2"/></svg></div>
<svg style="left:2160px;top:186px;" width="124" height="32" viewBox="0 0 124 32"><path d="M4 5.500H113.500V30" fill="none" stroke="#0c0c0c" stroke-width="2.600"/></svg>
<div style="left:2335.5px;top:129.5px;width:2px;height:95px;background:#555555;"></div>
<svg style="left:2499px;top:158px;" width="23" height="36" viewBox="0 0 23 36"><path d="M16.500 0.500L1 20H10L5.500 35 21.500 13H12.500Z" fill="#d0d0d0"/></svg>
<div style="left:2539.5px;top:129.5px;width:2px;height:95px;background:#555555;"></div>
<svg style="left:2558px;top:139px;" width="23" height="23" viewBox="0 0 23 23"><g transform="translate(11.500 11.500)" fill="#d6d6d6"><rect x="-2.600" y="-11.500" width="5.200" height="6" transform="rotate(0)"/><rect x="-2.600" y="-11.500" width="5.200" height="6" transform="rotate(45)"/><rect x="-2.600" y="-11.500" width="5.200" height="6" transform="rotate(90)"/><rect x="-2.600" y="-11.500" width="5.200" height="6" transform="rotate(135)"/><rect x="-2.600" y="-11.500" width="5.200" height="6" transform="rotate(180)"/><rect x="-2.600" y="-11.500" width="5.200" height="6" transform="rotate(225)"/><rect x="-2.600" y="-11.500" width="5.200" height="6" transform="rotate(270)"/><rect x="-2.600" y="-11.500" width="5.200" height="6" transform="rotate(315)"/><circle r="8.200"/><circle r="3.600" fill="#3b3b3b"/></g></svg>
<svg style="left:2560px;top:195.5px;" width="21" height="16" viewBox="0 0 21 16"><rect x="0" y="0" width="21" height="1.800" fill="#d6d6d6"/><rect x="0" y="4.5" width="21" height="1.800" fill="#d6d6d6"/><rect x="0" y="9" width="21" height="1.800" fill="#d6d6d6"/><rect x="0" y="13.5" width="21" height="1.800" fill="#d6d6d6"/></svg>
<div style="left:8px;top:238px;width:76px;height:24px;background:#262626;"></div>
<div style="left:8px;top:261px;width:76px;height:1.5px;background:#1a1a1a;"></div>
<div style="left:8px;top:262.5px;width:76px;height:1250.5px;background:#3a3a3a;"></div>
<div style="left:8px;top:262.5px;width:76px;height:1.5px;background:#4a4a4a;"></div>
<svg style="left:18px;top:244px;" width="14" height="10" viewBox="0 0 14 10"><path d="M1 1L5.500 5 1 9 M8 1L12.500 5 8 9" fill="none" stroke="#bdbdbd" stroke-width="1.500"/></svg>
<svg style="left:26px;top:268px;" width="40" height="8" viewBox="0 0 40 8"><rect x="0" y="0" width="1.900" height="8" fill="#0f0f0f"/><rect x="3.45" y="0" width="1.900" height="8" fill="#0f0f0f"/><rect x="6.9" y="0" width="1.900" height="8" fill="#0f0f0f"/><rect x="10.35" y="0" width="1.900" height="8" fill="#0f0f0f"/><rect x="13.8" y="0" width="1.900" height="8" fill="#0f0f0f"/><rect x="17.25" y="0" width="1.900" height="8" fill="#0f0f0f"/><rect x="20.7" y="0" width="1.900" height="8" fill="#0f0f0f"/><rect x="24.15" y="0" width="1.900" height="8" fill="#0f0f0f"/><rect x="27.6" y="0" width="1.900" height="8" fill="#0f0f0f"/><rect x="31.05" y="0" width="1.900" height="8" fill="#0f0f0f"/><rect x="34.5" y="0" width="1.900" height="8" fill="#0f0f0f"/><rect x="37.95" y="0" width="1.900" height="8" fill="#0f0f0f"/></svg>
<svg style="left:0px;top:0px;" width="1" height="1" viewBox="0 0 1 1"><defs><linearGradient id="tg" x1="0" y1="0" x2="0" y2="1"><stop offset="0" stop-color="#e4e4e4"/><stop offset="1" stop-color="#a8a8a8"/></linearGradient><linearGradient id="tgd" x1="0" y1="0" x2="0" y2="1"><stop offset="0" stop-color="#7c7c7c"/><stop offset="1" stop-color="#505050"/></linearGradient><linearGradient id="tgh" x1="0" y1="0" x2="1" y2="0"><stop offset="0" stop-color="#3a3a3a"/><stop offset="1" stop-color="#d8d8d8"/></linearGradient></defs></svg>
<div style="left:18px;top:292px;width:56px;height:44px;background:#2b2b2b;border:1.500px solid #1c1c1c;box-shadow:0 0 0 1px #4c4c4c;"></div>
<svg style="left:23.5px;top:292px;" width="44" height="44" viewBox="0 0 44 44"><g transform="translate(-0.500 3.600) scale(0.920)"><path d="M16 4V34L23 27.500 27.500 38 32.500 36 28 25.500 37 25Z" fill="#161616" stroke="#e2e2e2" stroke-width="2.300" stroke-linejoin="miter"/></g></svg>
<svg style="left:23.5px;top:339.5px;" width="44" height="44" viewBox="0 0 44 44"><path d="M14.500 3.500V33L21.500 26.500 26 37.500 31 35.500 26.500 24.500 35 24Z" fill="url(#tg)"/></svg>
<svg style="left:23.5px;top:387.5px;" width="44" height="44" viewBox="0 0 44 44"><path d="M10.500 6H23.500V17.500H33.500V33H10.500Z" fill="url(#tg)"/><path d="M25.500 6.500L34 15H25.500Z" fill="url(#tg)"/><path d="M27 17.500H35V31H27Z" fill="#3a3a3a"/><path d="M28.500 20V38L33 33.500 40 33Z" fill="#e2e2e2"/></svg>
<svg style="left:23.5px;top:436px;" width="44" height="44" viewBox="0 0 44 44"><rect x="2" y="8" width="4" height="28" fill="url(#tg)"/><rect x="38" y="8" width="4" height="28" fill="url(#tg)"/><path d="M8.500 22L16 15.500V20H28V15.500L35.500 22 28 28.500V24H16V28.500Z" fill="#dcdcdc"/></svg>
<svg style="left:23.5px;top:485px;" width="44" height="44" viewBox="0 0 44 44"><path d="M8 17V36.500H36V17H31.500V31.500H12.500V17Z" fill="url(#tg)"/><rect x="14.5" y="26" width="3.800" height="3.800" fill="#dcdcdc"/><rect x="20.5" y="26" width="3.800" height="3.800" fill="#dcdcdc"/><rect x="26.5" y="26" width="3.800" height="3.800" fill="#dcdcdc"/><rect x="14.5" y="20" width="3.800" height="3.800" fill="#dcdcdc"/><rect x="26.5" y="20" width="3.800" height="3.800" fill="#dcdcdc"/><path d="M13 4.500L20.500 12" stroke="#dcdcdc" stroke-width="3.200"/><path d="M24 6.500V15.500H15Z" fill="#dcdcdc"/></svg>
<svg style="left:64px;top:520px;" width="9" height="9" viewBox="0 0 9 9"><path d="M8.500 0V8.500H0Z" fill="#d8d8d8"/></svg>
<div style="left:10px;top:532px;width:70px;height:1.5px;background:#525252;"></div>
<div class="t" style="left:32.5px;top:539.5px;font-size:41.5px;color:#dadada;font-family:'Liberation Serif',serif;">T</div>
<svg style="left:64px;top:571px;" width="9" height="9" viewBox="0 0 9 9"><path d="M8.500 0V8.500H0Z" fill="#d8d8d8"/></svg>
<svg style="left:23.5px;top:584.5px;" width="44" height="44" viewBox="0 0 44 44"><path d="M8 35L35 9" stroke="#dadada" stroke-width="2.600"/></svg>
<svg style="left:23.5px;top:633.5px;" width="44" height="44" viewBox="0 0 44 44"><g transform="translate(22.500 22) rotate(42) scale(1.050)"><path d="M-6.500 -12H6.500L9.500 4 0 21 -9.500 4Z" fill="url(#tg)"/><path d="M0 20V3" stroke="#2e2e2e" stroke-width="2"/><circle cx="0" cy="2.500" r="2.300" fill="#2e2e2e"/><rect x="-8" y="-18.500" width="16" height="4.500" fill="#dedede"/></g></svg>
<svg style="left:64px;top:668.5px;" width="9" height="9" viewBox="0 0 9 9"><path d="M8.500 0V8.500H0Z" fill="#d8d8d8"/></svg>
<svg style="left:23.5px;top:680.5px;" width="44" height="44" viewBox="0 0 44 44"><g transform="translate(22 23) rotate(42)"><path d="M-5.500 -9H5.500V9L0 20 -5.500 9Z" fill="#7a7a7a"/><path d="M-5.500 9H5.500L0 20Z" fill="#d8d8d8"/><path d="M-5.500 -9V-14A5.500 5.500 0 0 1 5.500 -14V-9Z" fill="#e0e0e0"/><path d="M-5.500 -9H5.500" stroke="#2e2e2e" stroke-width="1.500"/></g></svg>
<svg style="left:64px;top:715.5px;" width="9" height="9" viewBox="0 0 9 9"><path d="M8.500 0V8.500H0Z" fill="#d8d8d8"/></svg>
<svg style="left:23.5px;top:729px;" width="44" height="44" viewBox="0 0 44 44"><rect x="9" y="11" width="26" height="22" fill="url(#tgd)" stroke="#dcdcdc" stroke-width="2.400"/><path d="M9 11L35 33 M35 11L9 33" stroke="#dcdcdc" stroke-width="1.800"/></svg>
<svg style="left:64px;top:764px;" width="9" height="9" viewBox="0 0 9 9"><path d="M8.500 0V8.500H0Z" fill="#d8d8d8"/></svg>
<svg style="left:23.5px;top:777px;" width="44" height="44" viewBox="0 0 44 44"><rect x="9" y="11" width="26" height="22" fill="url(#tgd)" stroke="#dcdcdc" stroke-width="2.400"/></svg>
<svg style="left:64px;top:812px;" width="9" height="9" viewBox="0 0 9 9"><path d="M8.500 0V8.500H0Z" fill="#d8d8d8"/></svg>
<svg style="left:23.5px;top:825.5px;" width="44" height="44" viewBox="0 0 44 44"><path d="M7 33V10H38" fill="none" stroke="#a0a0a0" stroke-width="2"/><rect x="10.5" y="13" width="5.500" height="5.500" fill="#dcdcdc"/><rect x="17.8" y="13" width="5.500" height="5.500" fill="#dcdcdc"/><rect x="25.1" y="13" width="5.500" height="5.500" fill="#dcdcdc"/><rect x="32.4" y="13" width="5.500" height="5.500" fill="#dcdcdc"/><rect x="10.5" y="27.5" width="5.500" height="5.500" fill="#dcdcdc"/><rect x="17.8" y="27.5" width="5.500" height="5.500" fill="#dcdcdc"/><rect x="25.1" y="27.5" width="5.500" height="5.500" fill="#dcdcdc"/><rect x="32.4" y="27.5" width="5.500" height="5.500" fill="#dcdcdc"/><rect x="10.500" y="20.500" width="27.500" height="4.500" fill="#c8c8c8"/></svg>
<svg style="left:23.5px;top:874px;" width="44" height="44" viewBox="0 0 44 44"><path d="M7 10H37V33" fill="none" stroke="#a0a0a0" stroke-width="2"/><rect x="7" y="12.500" width="5" height="21" fill="url(#tg)"/><rect x="21.500" y="12.500" width="5" height="21" fill="#c8c8c8"/><rect x="14" y="13" width="5.500" height="5.500" fill="#dcdcdc"/><rect x="14" y="20.3" width="5.500" height="5.500" fill="#dcdcdc"/><rect x="14" y="27.6" width="5.500" height="5.500" fill="#dcdcdc"/><rect x="28.5" y="13" width="5.500" height="5.500" fill="#dcdcdc"/><rect x="28.5" y="20.3" width="5.500" height="5.500" fill="#dcdcdc"/><rect x="28.5" y="27.6" width="5.500" height="5.500" fill="#dcdcdc"/></svg>
<div style="left:10px;top:922px;width:70px;height:1.5px;background:#525252;"></div>
<svg style="left:23.5px;top:926.5px;" width="44" height="44" viewBox="0 0 44 44"><g fill="none" stroke="#d8d8d8" stroke-width="2.600"><circle cx="34" cy="11.500" r="4"/><ellipse cx="33" cy="30" rx="5" ry="3.600"/></g><path d="M6 13C14 14 22 18 30 27L27 29C21 22 14 18 6 17Z" fill="#d8d8d8"/><path d="M6 29C14 28 22 24 31 14L28.500 12.500C22 19 14 24 6 25.500Z" fill="#d8d8d8"/></svg>
<svg style="left:23.5px;top:975px;" width="44" height="44" viewBox="0 0 44 44"><path d="M7 8V30L15 22.500 22 22.500Z" fill="url(#tg)"/><rect x="15" y="11" width="4.500" height="4.500" fill="#dcdcdc"/><rect x="25" y="11" width="4.500" height="4.500" fill="#dcdcdc"/><rect x="35" y="11" width="4.500" height="4.500" fill="#dcdcdc"/><rect x="35" y="21" width="4.500" height="4.500" fill="#dcdcdc"/><rect x="35" y="31" width="4.500" height="4.500" fill="#dcdcdc"/><rect x="25" y="31" width="4.500" height="4.500" fill="#dcdcdc"/><rect x="15" y="31" width="4.500" height="4.500" fill="#dcdcdc"/><path d="M19.500 13.200H37 M37.200 15V33 M19.500 33.200H35" fill="none" stroke="#dcdcdc" stroke-width="1.200" stroke-dasharray="2 2"/></svg>
<svg style="left:64px;top:1010px;" width="9" height="9" viewBox="0 0 9 9"><path d="M8.500 0V8.500H0Z" fill="#d8d8d8"/></svg>
<svg style="left:23.5px;top:1024px;" width="44" height="44" viewBox="0 0 44 44"><rect x="7" y="11" width="30" height="22" fill="url(#tgh)" stroke="#dcdcdc" stroke-width="2"/></svg>
<svg style="left:23.5px;top:1071.5px;" width="44" height="44" viewBox="0 0 44 44"><rect x="7" y="11" width="30" height="22" fill="#4a4a4a"/><rect x="7" y="11" width="5" height="5.500" fill="#d8d8d8" opacity="1"/><rect x="17" y="11" width="5" height="5.500" fill="#d8d8d8" opacity="1"/><rect x="27" y="11" width="5" height="5.500" fill="#d8d8d8" opacity="1"/><rect x="12" y="16.5" width="5" height="5.500" fill="#d8d8d8" opacity="0.73"/><rect x="22" y="16.5" width="5" height="5.500" fill="#d8d8d8" opacity="0.73"/><rect x="32" y="16.5" width="5" height="5.500" fill="#d8d8d8" opacity="0.73"/><rect x="7" y="22" width="5" height="5.500" fill="#d8d8d8" opacity="0.46"/><rect x="17" y="22" width="5" height="5.500" fill="#d8d8d8" opacity="0.46"/><rect x="27" y="22" width="5" height="5.500" fill="#d8d8d8" opacity="0.46"/><rect x="12" y="27.5" width="5" height="5.500" fill="#d8d8d8" opacity="0.19"/><rect x="22" y="27.5" width="5" height="5.500" fill="#d8d8d8" opacity="0.19"/><rect x="32" y="27.5" width="5" height="5.500" fill="#d8d8d8" opacity="0.19"/><rect x="7" y="11" width="30" height="22" fill="none" stroke="#dcdcdc" stroke-width="2"/></svg>
<div style="left:10px;top:1119px;width:70px;height:1.5px;background:#525252;"></div>
<svg style="left:23.5px;top:1127px;" width="44" height="44" viewBox="0 0 44 44"><path d="M8 9H37V25L29 36H8Z" fill="url(#tg)"/><path d="M37.500 25.500H28.500V36.500Z" fill="#787878"/><path d="M28 25H37" stroke="#2a2a2a" stroke-width="1.200"/><path d="M28 25V36" stroke="#2a2a2a" stroke-width="1.200"/><path d="M14 16H31 M14 20.500H31 M14 25H24" stroke="#1e1e1e" stroke-width="2.600"/></svg>
<svg style="left:23.5px;top:1173.5px;" width="44" height="44" viewBox="0 0 44 44"><g transform="translate(33 8) rotate(47.200)"><rect x="-3.300" y="0" width="6.600" height="11" rx="3.300" fill="#dcdcdc"/><rect x="-6.500" y="9.500" width="13" height="4.200" fill="#dcdcdc"/><rect x="-3" y="13.500" width="6" height="4" fill="#dcdcdc"/><path d="M-2.800 17V29L0 35.500 2.800 29V17" fill="none" stroke="#dcdcdc" stroke-width="1.700"/></g><rect x="13.800" y="29.200" width="18" height="6.600" fill="#3a3a3a" stroke="#dcdcdc" stroke-width="1.800"/><rect x="16.2" y="31" width="3.300" height="3.200" fill="#8a8a8a"/><rect x="21.2" y="31" width="3.300" height="3.200" fill="#8a8a8a"/><rect x="26.2" y="31" width="3.300" height="3.200" fill="#8a8a8a"/><circle cx="7" cy="33" r="2.200" fill="#3a3a3a" stroke="#dcdcdc" stroke-width="1.400"/></svg>
<svg style="left:64px;top:1208.5px;" width="9" height="9" viewBox="0 0 9 9"><path d="M8.500 0V8.500H0Z" fill="#d8d8d8"/></svg>
<svg style="left:23.5px;top:1221.5px;" width="44" height="44" viewBox="0 0 44 44"><defs><linearGradient id="hg" gradientUnits="userSpaceOnUse" x1="0" y1="6" x2="0" y2="38"><stop offset="0" stop-color="#e0e0e0"/><stop offset="1" stop-color="#9c9c9c"/></linearGradient></defs><g fill="none" stroke="url(#hg)" stroke-width="4.700" stroke-linecap="round"><path d="M19 25L15.600 12.800"/><path d="M23 24L21.900 8.800"/><path d="M27.500 24L29 10.800"/><path d="M31 27L35.500 17"/><path d="M17 31L7.200 22.800"/></g><path d="M13.500 22H33.500L33.500 28 31.500 38H16.500L12.500 29Z" fill="url(#hg)"/></svg>
<svg style="left:23.5px;top:1269px;" width="44" height="44" viewBox="0 0 44 44"><defs><radialGradient id="zg" cx="0.45" cy="0.35" r="0.7"><stop offset="0" stop-color="#8a8484"/><stop offset="1" stop-color="#5c5c5c"/></radialGradient></defs><circle cx="19.400" cy="17.500" r="9.300" fill="url(#zg)" stroke="#cfcfcf" stroke-width="2.600"/><path d="M27 25.800L36.800 35.600" stroke="#cfcfcf" stroke-width="4.600" stroke-linecap="round"/></svg>
<div style="left:10px;top:1317px;width:70px;height:1.5px;background:#525252;"></div>
<div style="left:42.5px;top:1340px;width:22.5px;height:24.5px;background:#5a5a5a;border:3.500px solid #0c0c0c;box-shadow:0 0 0 1.500px #6a6a6a;"></div>
<div style="left:26px;top:1329px;width:24px;height:22.5px;background:#fff;border:1.500px solid #8c8c8c;"></div>
<svg style="left:27px;top:1330px;" width="22" height="20.5" viewBox="0 0 22 20.5"><path d="M1 19.500L21 1" stroke="#e8121c" stroke-width="3.600"/></svg>
<svg style="left:53px;top:1324px;" width="14" height="14" viewBox="0 0 14 14"><path d="M3 4.500C7 2.500 10.500 5 10.500 9.500" fill="none" stroke="#d8d8d8" stroke-width="1.600"/><path d="M0.500 4.500L5 1V8Z M10.500 13.500L7 9H14Z" fill="#d8d8d8"/></svg>
<div style="left:29.5px;top:1371.5px;width:15.5px;height:15px;background:#3a3a3a;border:3px solid #0c0c0c;box-shadow:0 0 0 1px #6a6a6a;"></div>
<div style="left:23.5px;top:1365px;width:14px;height:14px;background:#fff;border:2px solid #0c0c0c;box-shadow:0 0 0 1px #6a6a6a;"></div>
<svg style="left:25.5px;top:1367px;" width="10" height="10" viewBox="0 0 10 10"><path d="M0.500 9.500L9.500 0.500" stroke="#e8121c" stroke-width="2"/></svg>
<div style="left:14.5px;top:1396px;width:30px;height:25px;background:#2b2b2b;border:1.500px solid #1c1c1c;box-shadow:0 0 0 1px #4c4c4c;"></div>
<div style="left:21.5px;top:1401px;width:16.5px;height:16px;background:#5a5a5a;border:2.200px solid #d6d6d6;"></div>
<div class="t" style="left:52.5px;top:1396px;font-size:25px;color:#d6d6d6;font-family:'Liberation Serif',serif;font-weight:bold;">T</div>
<div style="left:18px;top:1434px;width:55.5px;height:44px;background:#2b2b2b;border:1.500px solid #1c1c1c;box-shadow:0 0 0 1px #4c4c4c;"></div>
<div style="left:30px;top:1442px;width:30.5px;height:25.5px;background:#fff;border:1.500px solid #8c8c8c;"></div>
<svg style="left:31px;top:1443px;" width="28.5" height="23.5" viewBox="0 0 28.5 23.5"><path d="M1 22.500L27.500 1" stroke="#e8121c" stroke-width="3.800"/></svg>
<svg style="left:64px;top:1469px;" width="8" height="8" viewBox="0 0 8 8"><path d="M7.500 0V7.500H0Z" fill="#d8d8d8"/></svg>
<div style="left:18px;top:1492px;width:55.5px;height:20px;background:#2b2b2b;border:1.500px solid #1c1c1c;border-bottom:none;box-shadow:0 0 0 1px #4c4c4c;overflow:hidden;"><svg style="left:15.500px;top:7.500px;" width="22" height="16" viewBox="0 0 22 16"><rect x="1" y="1" width="20" height="14" fill="none" stroke="#d0d0d0" stroke-width="2"/><path d="M1 5H21" stroke="#d0d0d0" stroke-width="2"/><rect x="4" y="8" width="8" height="6" fill="#d0d0d0"/></svg></div>
<div style="left:8px;top:1511.8px;width:76px;height:1.5px;background:#161616;"></div>
<div style="left:84px;top:238px;width:6px;height:1275px;background:#1f1f1f;"></div>
<div style="left:90px;top:238px;width:2174px;height:57px;background:#252525;"></div>
<div style="left:90px;top:238px;width:362px;height:57px;background:#3a3a3a;border-right:1px solid #222;"></div>
<div style="left:90px;top:294px;width:2174px;height:1px;background:#1c1c1c;"></div>
<svg style="left:119px;top:259px;" width="14" height="14" viewBox="0 0 14 14"><path d="M1.5 1.5 L12.5 12.5 M12.5 1.5 L1.5 12.5" stroke="#d8d8d8" stroke-width="1.8" fill="none"/></svg>
<div class="t" style="left:152px;top:258px;font-size:21.5px;color:#dedede;letter-spacing:-0.2px;">未命名-1 @ 42% [GPU 预览]</div>
<div style="left:122px;top:328px;width:2110px;height:1152px;background:#626262;overflow:hidden;"></div>
<div style="left:778px;top:345px;width:797.5px;height:1118px;border:1.2px solid #d9536f;"></div>
<div style="left:794.5px;top:360.5px;width:773.5px;height:1094.5px;background:#000;"></div>
<div style="left:790px;top:356px;width:773.5px;height:1095px;background:#fff;border-left:1px solid #2a2a2a;border-top:1px solid #2a2a2a;"></div>
<svg style="left:866.3px;top:430.4px;" width="626" height="945.76" viewBox="0 0 626 945.76"><defs><pattern id="gp" x="0" y="0" width="156" height="27.29" patternUnits="userSpaceOnUse"><rect x="140.4" y="0" width="15.6" height="15.9" fill="#97de97"/><path d="M0 0.5H156 M0 15.9H156" stroke="#8bab90" stroke-width="1.150" fill="none"/><path d="M0.5 0V15.9 M16.1 0V15.9 M31.7 0V15.9 M47.3 0V15.9 M62.9 0V15.9 M78.5 0V15.9 M94.1 0V15.9 M109.7 0V15.9 M125.3 0V15.9 M140.9 0V15.9 " stroke="#94b598" stroke-width="1.100" fill="none"/></pattern></defs><rect x="0" y="0" width="624" height="943.76" fill="url(#gp)"/><rect x="0.5" y="0.5" width="624" height="943.76" fill="none" stroke="#9a8fb4" stroke-width="1.1"/></svg>
<div style="left:90px;top:295px;width:2142px;height:33px;background:#212121;"></div>
<div style="left:90px;top:326px;width:2142px;height:2px;background:#9b9b9b;"></div>
<div style="left:90px;top:328px;width:32px;height:1152px;background:#212121;"></div>
<div style="left:120.3px;top:295px;width:1.7px;height:1185px;background:#9b9b9b;"></div>
<svg style="left:90px;top:295px;" width="31" height="32" viewBox="0 0 31 32"><path d="M0 10.5H30 M9.5 0V31" stroke="#cfcfcf" stroke-width="1.6" stroke-dasharray="1.6 2.4" fill="none"/></svg>
<svg style="left:90px;top:295px;" width="2142" height="32" viewBox="0 0 2142 32"><path d="M44.8 28V32 M52.2 28V32 M59.6 28V32 M67.0 28V32 M81.7 28V32 M89.1 28V32 M96.4 28V32 M103.8 28V32 M118.5 28V32 M125.9 28V32 M133.3 28V32 M140.6 28V32 M155.4 28V32 M162.7 28V32 M170.1 28V32 M177.5 28V32 M192.2 28V32 M199.6 28V32 M206.9 28V32 M214.3 28V32 M229.0 28V32 M236.4 28V32 M243.8 28V32 M251.2 28V32 M265.9 28V32 M273.3 28V32 M280.6 28V32 M288.0 28V32 M302.7 28V32 M310.1 28V32 M317.5 28V32 M324.8 28V32 M339.6 28V32 M346.9 28V32 M354.3 28V32 M361.7 28V32 M376.4 28V32 M383.8 28V32 M391.1 28V32 M398.5 28V32 M413.2 28V32 M420.6 28V32 M428.0 28V32 M435.4 28V32 M450.1 28V32 M457.5 28V32 M464.8 28V32 M472.2 28V32 M486.9 28V32 M494.3 28V32 M501.7 28V32 M509.0 28V32 M523.8 28V32 M531.1 28V32 M538.5 28V32 M545.9 28V32 M560.6 28V32 M568.0 28V32 M575.3 28V32 M582.7 28V32 M597.4 28V32 M604.8 28V32 M612.2 28V32 M619.6 28V32 M634.3 28V32 M641.7 28V32 M649.0 28V32 M656.4 28V32 M671.1 28V32 M678.5 28V32 M685.9 28V32 M693.2 28V32 M708.0 28V32 M715.3 28V32 M722.7 28V32 M730.1 28V32 M744.8 28V32 M752.2 28V32 M759.5 28V32 M766.9 28V32 M781.6 28V32 M789.0 28V32 M796.4 28V32 M803.8 28V32 M818.5 28V32 M825.9 28V32 M833.2 28V32 M840.6 28V32 M855.3 28V32 M862.7 28V32 M870.1 28V32 M877.4 28V32 M892.2 28V32 M899.5 28V32 M906.9 28V32 M914.3 28V32 M929.0 28V32 M936.4 28V32 M943.7 28V32 M951.1 28V32 M965.8 28V32 M973.2 28V32 M980.6 28V32 M988.0 28V32 M1002.7 28V32 M1010.1 28V32 M1017.4 28V32 M1024.8 28V32 M1039.5 28V32 M1046.9 28V32 M1054.3 28V32 M1061.6 28V32 M1076.4 28V32 M1083.7 28V32 M1091.1 28V32 M1098.5 28V32 M1113.2 28V32 M1120.6 28V32 M1127.9 28V32 M1135.3 28V32 M1150.0 28V32 M1157.4 28V32 M1164.8 28V32 M1172.2 28V32 M1186.9 28V32 M1194.3 28V32 M1201.6 28V32 M1209.0 28V32 M1223.7 28V32 M1231.1 28V32 M1238.5 28V32 M1245.8 28V32 M1260.6 28V32 M1267.9 28V32 M1275.3 28V32 M1282.7 28V32 M1297.4 28V32 M1304.8 28V32 M1312.1 28V32 M1319.5 28V32 M1334.2 28V32 M1341.6 28V32 M1349.0 28V32 M1356.4 28V32 M1371.1 28V32 M1378.5 28V32 M1385.8 28V32 M1393.2 28V32 M1407.9 28V32 M1415.3 28V32 M1422.7 28V32 M1430.0 28V32 M1444.8 28V32 M1452.1 28V32 M1459.5 28V32 M1466.9 28V32 M1481.6 28V32 M1489.0 28V32 M1496.3 28V32 M1503.7 28V32 M1518.4 28V32 M1525.8 28V32 M1533.2 28V32 M1540.6 28V32 M1555.3 28V32 M1562.7 28V32 M1570.0 28V32 M1577.4 28V32 M1592.1 28V32 M1599.5 28V32 M1606.9 28V32 M1614.2 28V32 M1629.0 28V32 M1636.3 28V32 M1643.7 28V32 M1651.1 28V32 M1665.8 28V32 M1673.2 28V32 M1680.5 28V32 M1687.9 28V32 M1702.6 28V32 M1710.0 28V32 M1717.4 28V32 M1724.8 28V32 M1739.5 28V32 M1746.9 28V32 M1754.2 28V32 M1761.6 28V32 M1776.3 28V32 M1783.7 28V32 M1791.1 28V32 M1798.4 28V32 M1813.2 28V32 M1820.5 28V32 M1827.9 28V32 M1835.3 28V32 M1850.0 28V32 M1857.4 28V32 M1864.7 28V32 M1872.1 28V32 M1886.8 28V32 M1894.2 28V32 M1901.6 28V32 M1909.0 28V32 M1923.7 28V32 M1931.1 28V32 M1938.4 28V32 M1945.8 28V32 M1960.5 28V32 M1967.9 28V32 M1975.3 28V32 M1982.6 28V32 M1997.4 28V32 M2004.7 28V32 M2012.1 28V32 M2019.5 28V32 M2034.2 28V32 M2041.6 28V32 M2048.9 28V32 M2056.3 28V32 M2071.0 28V32 M2078.4 28V32 M2085.8 28V32 M2093.2 28V32 M2107.9 28V32 M2115.3 28V32 M2122.6 28V32 M2130.0 28V32 M37.5 22V32 M74.3 22V32 M111.2 22V32 M184.8 22V32 M221.7 22V32 M258.5 22V32 M295.4 22V32 M369.0 22V32 M405.9 22V32 M442.7 22V32 M479.6 22V32 M553.2 22V32 M590.1 22V32 M626.9 22V32 M663.8 22V32 M737.4 22V32 M774.3 22V32 M811.1 22V32 M848.0 22V32 M921.6 22V32 M958.5 22V32 M995.3 22V32 M1032.2 22V32 M1105.8 22V32 M1142.7 22V32 M1179.5 22V32 M1216.4 22V32 M1290.0 22V32 M1326.9 22V32 M1363.7 22V32 M1400.6 22V32 M1474.2 22V32 M1511.1 22V32 M1547.9 22V32 M1584.8 22V32 M1658.4 22V32 M1695.3 22V32 M1732.1 22V32 M1769.0 22V32 M1842.6 22V32 M1879.5 22V32 M1916.3 22V32 M1953.2 22V32 M2026.8 22V32 M2063.7 22V32 M2100.5 22V32 M2137.4 22V32 M148.0 0V32 M332.2 0V32 M516.4 0V32 M700.6 0V32 M884.8 0V32 M1069.0 0V32 M1253.2 0V32 M1437.4 0V32 M1621.6 0V32 M1805.8 0V32 M1990.0 0V32 " stroke="#b4b4b4" stroke-width="1.1" fill="none"/></svg>
<div class="t" style="left:243px;top:299.5px;font-size:19.5px;color:#d6d6d6;letter-spacing:-0.3px;">150</div>
<div class="t" style="left:427.2px;top:299.5px;font-size:19.5px;color:#d6d6d6;letter-spacing:-0.3px;">100</div>
<div class="t" style="left:611.4px;top:299.5px;font-size:19.5px;color:#d6d6d6;letter-spacing:-0.3px;">50</div>
<div class="t" style="left:795.6px;top:299.5px;font-size:19.5px;color:#d6d6d6;letter-spacing:-0.3px;">0</div>
<div class="t" style="left:979.8px;top:299.5px;font-size:19.5px;color:#d6d6d6;letter-spacing:-0.3px;">50</div>
<div class="t" style="left:1164px;top:299.5px;font-size:19.5px;color:#d6d6d6;letter-spacing:-0.3px;">100</div>
<div class="t" style="left:1348.2px;top:299.5px;font-size:19.5px;color:#d6d6d6;letter-spacing:-0.3px;">150</div>
<div class="t" style="left:1532.4px;top:299.5px;font-size:19.5px;color:#d6d6d6;letter-spacing:-0.3px;">200</div>
<div class="t" style="left:1716.6px;top:299.5px;font-size:19.5px;color:#d6d6d6;letter-spacing:-0.3px;">250</div>
<div class="t" style="left:1900.8px;top:299.5px;font-size:19.5px;color:#d6d6d6;letter-spacing:-0.3px;">300</div>
<div class="t" style="left:2085px;top:299.5px;font-size:19.5px;color:#d6d6d6;letter-spacing:-0.3px;">350</div>
<svg style="left:90px;top:328px;" width="31" height="1152" viewBox="0 0 31 1152"><path d="M27 6.4H31 M27 13.8H31 M27 21.1H31 M0 28.5H31 M27 35.9H31 M27 43.2H31 M27 50.6H31 M27 58.0H31 M21 65.3H31 M27 72.7H31 M27 80.1H31 M27 87.4H31 M27 94.8H31 M21 102.2H31 M27 109.5H31 M27 116.9H31 M27 124.3H31 M27 131.7H31 M21 139.0H31 M27 146.4H31 M27 153.8H31 M27 161.1H31 M27 168.5H31 M21 175.9H31 M27 183.2H31 M27 190.6H31 M27 198.0H31 M27 205.3H31 M0 212.7H31 M27 220.1H31 M27 227.4H31 M27 234.8H31 M27 242.2H31 M21 249.5H31 M27 256.9H31 M27 264.3H31 M27 271.6H31 M27 279.0H31 M21 286.4H31 M27 293.7H31 M27 301.1H31 M27 308.5H31 M27 315.9H31 M21 323.2H31 M27 330.6H31 M27 338.0H31 M27 345.3H31 M27 352.7H31 M21 360.1H31 M27 367.4H31 M27 374.8H31 M27 382.2H31 M27 389.5H31 M0 396.9H31 M27 404.3H31 M27 411.6H31 M27 419.0H31 M27 426.4H31 M21 433.7H31 M27 441.1H31 M27 448.5H31 M27 455.8H31 M27 463.2H31 M21 470.6H31 M27 477.9H31 M27 485.3H31 M27 492.7H31 M27 500.1H31 M21 507.4H31 M27 514.8H31 M27 522.2H31 M27 529.5H31 M27 536.9H31 M21 544.3H31 M27 551.6H31 M27 559.0H31 M27 566.4H31 M27 573.7H31 M0 581.1H31 M27 588.5H31 M27 595.8H31 M27 603.2H31 M27 610.6H31 M21 617.9H31 M27 625.3H31 M27 632.7H31 M27 640.0H31 M27 647.4H31 M21 654.8H31 M27 662.1H31 M27 669.5H31 M27 676.9H31 M27 684.3H31 M21 691.6H31 M27 699.0H31 M27 706.4H31 M27 713.7H31 M27 721.1H31 M21 728.5H31 M27 735.8H31 M27 743.2H31 M27 750.6H31 M27 757.9H31 M0 765.3H31 M27 772.7H31 M27 780.0H31 M27 787.4H31 M27 794.8H31 M21 802.1H31 M27 809.5H31 M27 816.9H31 M27 824.2H31 M27 831.6H31 M21 839.0H31 M27 846.3H31 M27 853.7H31 M27 861.1H31 M27 868.5H31 M21 875.8H31 M27 883.2H31 M27 890.6H31 M27 897.9H31 M27 905.3H31 M21 912.7H31 M27 920.0H31 M27 927.4H31 M27 934.8H31 M27 942.1H31 M0 949.5H31 M27 956.9H31 M27 964.2H31 M27 971.6H31 M27 979.0H31 M21 986.3H31 M27 993.7H31 M27 1001.1H31 M27 1008.4H31 M27 1015.8H31 M21 1023.2H31 M27 1030.5H31 M27 1037.9H31 M27 1045.3H31 M27 1052.7H31 M21 1060.0H31 M27 1067.4H31 M27 1074.8H31 M27 1082.1H31 M27 1089.5H31 M21 1096.9H31 M27 1104.2H31 M27 1111.6H31 M27 1119.0H31 M27 1126.3H31 M0 1133.7H31 M27 1141.1H31 M27 1148.4H31 " stroke="#b4b4b4" stroke-width="1.1" fill="none"/></svg>
<div class="t" style="left:95.5px;top:362px;font-size:18.5px;color:#d6d6d6;">0</div>
<div class="t" style="left:95.5px;top:546.2px;font-size:18.5px;color:#d6d6d6;">5</div>
<div class="t" style="left:95.5px;top:565.1px;font-size:18.5px;color:#d6d6d6;">0</div>
<div class="t" style="left:95.5px;top:730.4px;font-size:18.5px;color:#d6d6d6;">1</div>
<div class="t" style="left:95.5px;top:749.3px;font-size:18.5px;color:#d6d6d6;">0</div>
<div class="t" style="left:95.5px;top:768.2px;font-size:18.5px;color:#d6d6d6;">0</div>
<div class="t" style="left:95.5px;top:914.6px;font-size:18.5px;color:#d6d6d6;">1</div>
<div class="t" style="left:95.5px;top:933.5px;font-size:18.5px;color:#d6d6d6;">5</div>
<div class="t" style="left:95.5px;top:952.4px;font-size:18.5px;color:#d6d6d6;">0</div>
<div class="t" style="left:95.5px;top:1098.8px;font-size:18.5px;color:#d6d6d6;">2</div>
<div class="t" style="left:95.5px;top:1117.7px;font-size:18.5px;color:#d6d6d6;">0</div>
<div class="t" style="left:95.5px;top:1136.6px;font-size:18.5px;color:#d6d6d6;">0</div>
<div class="t" style="left:95.5px;top:1283px;font-size:18.5px;color:#d6d6d6;">2</div>
<div class="t" style="left:95.5px;top:1301.9px;font-size:18.5px;color:#d6d6d6;">5</div>
<div class="t" style="left:95.5px;top:1320.8px;font-size:18.5px;color:#d6d6d6;">0</div>
<div style="left:90px;top:1467.2px;width:30px;height:12.8px;overflow:hidden;"><div class="t" style="left:5px;top:0;font-size:18.500px;color:#d6d6d6;">3</div></div>
<div style="left:90px;top:1486.1px;width:30px;height:-6.1px;overflow:hidden;"><div class="t" style="left:5px;top:0;font-size:18.500px;color:#d6d6d6;">0</div></div>
<div style="left:90px;top:1505px;width:30px;height:-25px;overflow:hidden;"><div class="t" style="left:5px;top:0;font-size:18.500px;color:#d6d6d6;">0</div></div>
<div style="left:2232px;top:295px;width:31px;height:1185px;background:#292929;"></div>
<div style="left:2233.5px;top:447.5px;width:29px;height:880.8px;background:#828282;border-left:1px solid #949494;"></div>
<svg style="left:2239px;top:304px;" width="18" height="14" viewBox="0 0 18 14"><path d="M9 0.500L17.500 12.500H0.500Z" fill="#dcdcdc"/></svg>
<svg style="left:2239px;top:1458px;" width="18" height="14" viewBox="0 0 18 14"><path d="M9 13L17.5 1H0.5Z" fill="#dcdcdc"/></svg>
<div style="left:2263px;top:238px;width:4px;height:1275px;background:#202020;"></div>
<div style="left:90px;top:1480px;width:2173px;height:33px;background:#3a3a3a;"></div>
<div style="left:90px;top:1479.5px;width:2142px;height:1.5px;background:#4a4a4a;"></div>
<div style="left:83px;top:1511.8px;width:2184px;height:1.5px;background:#161616;"></div>
<svg style="left:112px;top:1487px;" width="18" height="20" viewBox="0 0 18 20"><path d="M1.5 1V19" stroke="#8f8f8f" stroke-width="2.2"/><path d="M16.5 1V19L4 10Z" fill="#8f8f8f"/></svg>
<svg style="left:154px;top:1487px;" width="14" height="20" viewBox="0 0 14 20"><path d="M13 1V19L1 10Z" fill="#8f8f8f"/></svg>
<div class="t" style="left:205px;top:1487px;font-size:20px;color:#e6e6e6;">1</div>
<svg style="left:346px;top:1491px;" width="16" height="12" viewBox="0 0 16 12"><path d="M0.5 0.5H15.5L8 11.5Z" fill="#e0e0e0"/></svg>
<svg style="left:400px;top:1487px;" width="14" height="20" viewBox="0 0 14 20"><path d="M1 1V19L13 10Z" fill="#8f8f8f"/></svg>
<svg style="left:438px;top:1487px;" width="18" height="20" viewBox="0 0 18 20"><path d="M16.5 1V19" stroke="#8f8f8f" stroke-width="2.2"/><path d="M1.5 1V19L14 10Z" fill="#8f8f8f"/></svg>
<svg style="left:487px;top:1483px;" width="30" height="28" viewBox="0 0 30 28"><circle cx="12.5" cy="13" r="12" fill="#d0d0d0"/><path d="M7 6.5H14L18.5 11V20H7Z" fill="#d0d0d0" stroke="#2a2a2a" stroke-width="1.8"/><path d="M13.5 6.5V11.5H18.5" fill="none" stroke="#2a2a2a" stroke-width="1.8"/><path d="M24 22H29L26.5 25Z" fill="#e0e0e0"/></svg>
<div class="t" style="left:552px;top:1487px;font-size:19.5px;color:#dcdcdc;letter-spacing:0px;">[基本]（工作）</div>
<svg style="left:756px;top:1491px;" width="16" height="12" viewBox="0 0 16 12"><path d="M0.5 0.5H15.5L8 11.5Z" fill="#e0e0e0"/></svg>
<div style="left:802.5px;top:1485.5px;width:22px;height:22px;background:radial-gradient(circle at 45% 40%,#6fc83c,#3f9a1f 75%,#2f7a17);border-radius:50%;"></div>
<div class="t" style="left:836px;top:1486.5px;font-size:20px;color:#e3e3e3;">无错误</div>
<svg style="left:1041px;top:1493px;" width="12" height="8" viewBox="0 0 12 8"><path d="M0.5 0.5H11.5L6 7.5Z" fill="#e0e0e0"/></svg>
<div style="left:1067px;top:1481px;width:1120px;height:32px;background:#272727;"></div>
<div style="left:1406px;top:1482.5px;width:702px;height:29px;background:#848484;border-top:1px solid #969696;"></div>
<svg style="left:1078px;top:1488px;" width="13" height="19" viewBox="0 0 13 19"><path d="M12.5 0.5V18.5L0.5 9.5Z" fill="#e0e0e0"/></svg>
<svg style="left:2164px;top:1488px;" width="13" height="19" viewBox="0 0 13 19"><path d="M0.5 0.5V18.5L12.5 9.5Z" fill="#e0e0e0"/></svg>
<svg style="left:2198px;top:1486px;" width="31" height="23" viewBox="0 0 31 23"><rect x="1.2" y="1.2" width="28" height="20" fill="#262626" stroke="#d8d8d8" stroke-width="2"/><path d="M15.2 1V22" stroke="#d8d8d8" stroke-width="2"/></svg>
<svg style="left:2240px;top:1490px;" width="20" height="20" viewBox="0 0 20 20"><rect x="16" y="0" width="2" height="2" fill="#cfcfcf"/><rect x="12" y="4" width="2" height="2" fill="#cfcfcf"/><rect x="16" y="4" width="2" height="2" fill="#cfcfcf"/><rect x="8" y="8" width="2" height="2" fill="#cfcfcf"/><rect x="12" y="8" width="2" height="2" fill="#cfcfcf"/><rect x="16" y="8" width="2" height="2" fill="#cfcfcf"/><rect x="4" y="12" width="2" height="2" fill="#cfcfcf"/><rect x="8" y="12" width="2" height="2" fill="#cfcfcf"/><rect x="12" y="12" width="2" height="2" fill="#cfcfcf"/><rect x="16" y="12" width="2" height="2" fill="#cfcfcf"/><rect x="0" y="16" width="2" height="2" fill="#cfcfcf"/><rect x="4" y="16" width="2" height="2" fill="#cfcfcf"/><rect x="8" y="16" width="2" height="2" fill="#cfcfcf"/><rect x="12" y="16" width="2" height="2" fill="#cfcfcf"/><rect x="16" y="16" width="2" height="2" fill="#cfcfcf"/></svg>
<div style="left:2267px;top:238px;width:333px;height:24px;background:#262626;"></div>
<div style="left:2267px;top:261px;width:333px;height:1.5px;background:#1a1a1a;"></div>
<div style="left:2267px;top:262.5px;width:333px;height:1250.5px;background:#383838;"></div>
<svg style="left:2570px;top:244px;" width="14" height="10" viewBox="0 0 14 10"><path d="M5.500 1L1 5 5.500 9 M12.500 1L8 5 12.500 9" fill="none" stroke="#bdbdbd" stroke-width="1.500"/></svg>
<div style="left:2267px;top:262.5px;width:333px;height:135.5px;background:#3a3a3a;border-top:1.500px solid #4a4a4a;border-bottom:1.500px solid #1e1e1e;"></div>
<svg style="left:2411.5px;top:268px;" width="40" height="8" viewBox="0 0 40 8"><rect x="0" y="0" width="1.900" height="8" fill="#0f0f0f"/><rect x="3.45" y="0" width="1.900" height="8" fill="#0f0f0f"/><rect x="6.9" y="0" width="1.900" height="8" fill="#0f0f0f"/><rect x="10.35" y="0" width="1.900" height="8" fill="#0f0f0f"/><rect x="13.8" y="0" width="1.900" height="8" fill="#0f0f0f"/><rect x="17.25" y="0" width="1.900" height="8" fill="#0f0f0f"/><rect x="20.7" y="0" width="1.900" height="8" fill="#0f0f0f"/><rect x="24.15" y="0" width="1.900" height="8" fill="#0f0f0f"/><rect x="27.6" y="0" width="1.900" height="8" fill="#0f0f0f"/><rect x="31.05" y="0" width="1.900" height="8" fill="#0f0f0f"/><rect x="34.5" y="0" width="1.900" height="8" fill="#0f0f0f"/><rect x="37.95" y="0" width="1.900" height="8" fill="#0f0f0f"/></svg>
<div style="left:2267px;top:398px;width:333px;height:139px;background:#3a3a3a;border-top:1.500px solid #4a4a4a;border-bottom:1.500px solid #1e1e1e;"></div>
<svg style="left:2411.5px;top:403.5px;" width="40" height="8" viewBox="0 0 40 8"><rect x="0" y="0" width="1.900" height="8" fill="#0f0f0f"/><rect x="3.45" y="0" width="1.900" height="8" fill="#0f0f0f"/><rect x="6.9" y="0" width="1.900" height="8" fill="#0f0f0f"/><rect x="10.35" y="0" width="1.900" height="8" fill="#0f0f0f"/><rect x="13.8" y="0" width="1.900" height="8" fill="#0f0f0f"/><rect x="17.25" y="0" width="1.900" height="8" fill="#0f0f0f"/><rect x="20.7" y="0" width="1.900" height="8" fill="#0f0f0f"/><rect x="24.15" y="0" width="1.900" height="8" fill="#0f0f0f"/><rect x="27.6" y="0" width="1.900" height="8" fill="#0f0f0f"/><rect x="31.05" y="0" width="1.900" height="8" fill="#0f0f0f"/><rect x="34.5" y="0" width="1.900" height="8" fill="#0f0f0f"/><rect x="37.95" y="0" width="1.900" height="8" fill="#0f0f0f"/></svg>
<div style="left:2267px;top:537px;width:333px;height:137px;background:#3a3a3a;border-top:1.500px solid #4a4a4a;border-bottom:1.500px solid #1e1e1e;"></div>
<svg style="left:2411.5px;top:542.5px;" width="40" height="8" viewBox="0 0 40 8"><rect x="0" y="0" width="1.900" height="8" fill="#0f0f0f"/><rect x="3.45" y="0" width="1.900" height="8" fill="#0f0f0f"/><rect x="6.9" y="0" width="1.900" height="8" fill="#0f0f0f"/><rect x="10.35" y="0" width="1.900" height="8" fill="#0f0f0f"/><rect x="13.8" y="0" width="1.900" height="8" fill="#0f0f0f"/><rect x="17.25" y="0" width="1.900" height="8" fill="#0f0f0f"/><rect x="20.7" y="0" width="1.900" height="8" fill="#0f0f0f"/><rect x="24.15" y="0" width="1.900" height="8" fill="#0f0f0f"/><rect x="27.6" y="0" width="1.900" height="8" fill="#0f0f0f"/><rect x="31.05" y="0" width="1.900" height="8" fill="#0f0f0f"/><rect x="34.5" y="0" width="1.900" height="8" fill="#0f0f0f"/><rect x="37.95" y="0" width="1.900" height="8" fill="#0f0f0f"/></svg>
<div style="left:2276px;top:616px;width:312px;height:48px;background:#232323;border-radius:5px;border:1px solid #1a1a1a;box-shadow:0 1px 0 #484848;"></div>
<div class="t" style="left:2342px;top:300px;font-size:23.5px;color:#e2e2e2;font-weight:500;">页面</div>
<div class="t" style="left:2342px;top:355px;font-size:23.5px;color:#e2e2e2;font-weight:500;">链接</div>
<div class="t" style="left:2342px;top:438px;font-size:23.5px;color:#e2e2e2;font-weight:500;">描边</div>
<div class="t" style="left:2342px;top:494px;font-size:23.5px;color:#e2e2e2;font-weight:500;">颜色</div>
<div class="t" style="left:2342px;top:576px;font-size:23.5px;color:#e2e2e2;font-weight:500;">色板</div>
<div class="t" style="left:2342px;top:628.5px;font-size:25px;color:#e2e2e2;letter-spacing:-0.15px;">CC Libraries</div>
<svg style="left:2289px;top:291px;" width="36" height="34" viewBox="0 0 36 34"><path d="M1 8L8 1H16V30H1Z" fill="url(#tg)"/><path d="M20 1H28L35 8V30H20Z" fill="url(#tg)"/><path d="M1 8H8V1Z M35 8H28V1Z" fill="#3a3a3a" opacity=".55"/><path d="M18 0V34" stroke="#e6e6e6" stroke-width="1.600"/></svg>
<svg style="left:2289px;top:353px;" width="36" height="22" viewBox="0 0 36 22"><g fill="none" stroke="#d4d4d4" stroke-width="3.600"><path d="M13 3.500H9.500A7.500 7.500 0 0 0 9.500 18.500H13"/><path d="M23 3.500H26.500A7.500 7.500 0 0 1 26.500 18.500H23"/><path d="M11 11H25"/></g></svg>
<svg style="left:2289px;top:432px;" width="36" height="28" viewBox="0 0 36 28"><rect x="0" y="0.500" width="35" height="2.500" fill="#d8d8d8"/><rect x="0" y="9" width="35" height="4.500" fill="#d8d8d8"/><rect x="0" y="19.500" width="35" height="7" fill="url(#tg)"/></svg>
<svg style="left:2286px;top:489px;" width="39" height="30" viewBox="0 0 39 30"><path d="M19 1C9 1 1 7 1 15.500 1 23 8 28.500 17 28.500 20.500 28.500 22 27 21.500 24.500 21 22 22 20.500 25 20.500 32 20.500 37 17.500 37 12 37 5.500 29 1 19 1Z" fill="url(#tg)"/><circle cx="9" cy="12" r="2.700" fill="#3a3a3a"/><circle cx="16" cy="6.5" r="2.700" fill="#3a3a3a"/><circle cx="25" cy="6.5" r="2.700" fill="#3a3a3a"/><circle cx="31" cy="12" r="2.700" fill="#3a3a3a"/><circle cx="11" cy="20.5" r="2.700" fill="#3a3a3a"/></svg>
<svg style="left:2289px;top:573px;" width="33" height="23" viewBox="0 0 33 23"><rect x="1" y="1" width="31" height="21" fill="#4a4a4a" stroke="#d6d6d6" stroke-width="2"/><path d="M11.300 1V22 M21.600 1V22 M1 11.500H32" stroke="#d6d6d6" stroke-width="2"/><rect x="2" y="2" width="8.300" height="8.500" fill="#1e1e1e"/><rect x="12.300" y="2" width="8.300" height="8.500" fill="#5a5a5a"/><rect x="22.600" y="2" width="8.400" height="8.500" fill="#8a8a8a"/><rect x="2" y="12.500" width="8.300" height="8.500" fill="#7a7a7a"/></svg>
<svg style="left:2286px;top:625.4px;overflow:visible;" width="42" height="31" viewBox="0 0 42 31.200" preserveAspectRatio="none"><g fill="#c6c6c6"><circle cx="13.200" cy="18" r="13.200"/><circle cx="28" cy="14.200" r="14"/><ellipse cx="27" cy="20" rx="13" ry="11.200"/><rect x="13.200" y="18" width="13.800" height="13.200"/></g><g fill="none" stroke="#232323" stroke-width="2.6" stroke-linecap="round" stroke-linejoin="round"><path d="M20.400 7.930A9.900 11 0 1 1 23.800 24.970L13.500 17.100"/><path d="M23.300 15.600L16.800 9.970A8.800 8.800 0 1 0 16.800 26.030"/></g></svg>
<div class="t" style="left:2476px;top:1500px;font-size:13px;color:#444444;font-weight:bold;letter-spacing:0.3px;">www.kkx.net</div>
<div style="left:2267px;top:1511.8px;width:333px;height:1.5px;background:#161616;"></div>
<div style="left:1780.8px;top:531.5px;width:484.7px;height:544.5px;background:#1e1e1e;box-shadow:0 4px 14px rgba(0,0,0,.45);"></div>
<div style="left:1782px;top:532px;width:483px;height:7.5px;background:#151515;"></div>
<div style="left:1782px;top:539.5px;width:483px;height:54.5px;background:#272727;"></div>
<div style="left:1880px;top:540px;width:196px;height:56px;background:#3d3d3d;border-top:1px solid #4c4c4c;"></div>
<div style="left:1782px;top:594px;width:483px;height:465px;background:#474747;"></div>
<div style="left:1880px;top:593px;width:196px;height:3px;background:#3d3d3d;"></div>
<div style="left:1782px;top:593px;width:98px;height:1.5px;background:#1c1c1c;"></div>
<div style="left:2076px;top:593px;width:189px;height:1.5px;background:#1c1c1c;"></div>
<div class="t" style="left:1809px;top:557px;font-size:24px;color:#a6a6a6;font-weight:500;">色板</div>
<svg style="left:1895px;top:557px;" width="13" height="22" viewBox="0 0 13 22"><path d="M1.500 8L6.500 2.500 11.500 8 M1.500 14L6.500 19.500 11.500 14" fill="none" stroke="#e0e0e0" stroke-width="2"/></svg>
<div class="t" style="left:1916px;top:555.5px;font-size:25.5px;color:#ececec;letter-spacing:-0.45px;">CC Libraries</div>
<svg style="left:2183px;top:559px;" width="18" height="14" viewBox="0 0 18 14"><path d="M1 1L7.500 7 1 13 M10 1L16.500 7 10 13" fill="none" stroke="#d8d8d8" stroke-width="1.800"/></svg>
<div style="left:2213.5px;top:556px;width:1.5px;height:22px;background:#555;"></div>
<div style="left:2217px;top:556px;width:1.5px;height:22px;background:#555;"></div>
<svg style="left:2231.5px;top:559px;" width="21" height="15" viewBox="0 0 21 15"><rect x="0" y="0" width="21" height="1.800" fill="#dedede"/><rect x="0" y="4.3" width="21" height="1.800" fill="#dedede"/><rect x="0" y="8.6" width="21" height="1.800" fill="#dedede"/><rect x="0" y="12.9" width="21" height="1.800" fill="#dedede"/></svg>
<div style="left:1801px;top:605px;width:342.5px;height:34.5px;background:linear-gradient(#555,#585858);border:1.500px solid #343434;box-shadow:0 0 0 1px #505050;"></div>
<div style="left:2105.5px;top:608px;width:1.5px;height:29px;background:#454545;"></div>
<div style="left:2107px;top:608px;width:1.5px;height:29px;background:#636363;"></div>
<svg style="left:2119.5px;top:617.5px;" width="13" height="10" viewBox="0 0 13 10"><path d="M0 0H13L6.500 10Z" fill="#979797"/></svg>
<div style="left:2158px;top:604px;width:42px;height:36px;background:#262626;"></div>
<svg style="left:2168px;top:610px;" width="22" height="22" viewBox="0 0 22 22"><rect x="0" y="0" width="10" height="10" fill="#dedede"/><rect x="12" y="0" width="10" height="10" fill="#dedede"/><rect x="0" y="12" width="10" height="10" fill="#dedede"/><rect x="12" y="12" width="10" height="10" fill="#dedede"/></svg>
<svg style="left:2214px;top:610px;" width="22" height="22" viewBox="0 0 22 22"><rect x="0" y="0" width="22" height="4" fill="#dedede"/><rect x="0" y="6" width="22" height="4" fill="#dedede"/><rect x="0" y="12" width="22" height="4" fill="#dedede"/><rect x="0" y="18" width="22" height="4" fill="#dedede"/></svg>
<div style="left:1801px;top:650.5px;width:447px;height:46.5px;background:#7b7b7b;border:2px solid #2c2c2c;"></div>
<div style="left:2206px;top:652.5px;width:40px;height:42.5px;background:#4f4f4f;"></div>
<svg style="left:2220px;top:668px;" width="14" height="11" viewBox="0 0 14 11"><path d="M0 0H14L7 11Z" fill="#d6d6d6"/></svg>
<svg style="left:1809px;top:664px;" width="24" height="24" viewBox="0 0 24 24"><circle cx="9.500" cy="9.500" r="7.500" fill="none" stroke="#626262" stroke-width="1.800"/><path d="M15 15L22 22" stroke="#626262" stroke-width="2"/></svg>
<div class="t" style="left:1840.5px;top:665.5px;font-size:20.5px;color:#606060;letter-spacing:0.3px;">搜索 Adobe Stock</div>
<div style="left:1782px;top:708px;width:483px;height:2px;background:#2c2c2c;"></div>
<svg style="left:1975.9px;top:795.9px;overflow:visible;" width="96" height="68.1" viewBox="0 0 42 31.200" preserveAspectRatio="none"><g fill="#6e6e6e"><circle cx="13.200" cy="18" r="13.200"/><circle cx="28" cy="14.200" r="14"/><ellipse cx="27" cy="20" rx="13" ry="11.200"/><rect x="13.200" y="18" width="13.800" height="13.200"/></g><g fill="none" stroke="#474747" stroke-width="3" stroke-linecap="round" stroke-linejoin="round"><path d="M20.400 7.930A9.900 11 0 1 1 23.800 24.970L13.500 17.100"/><path d="M23.300 15.600L16.800 9.970A8.800 8.800 0 1 0 16.800 26.030"/></g><rect x="30.700" y="11.400" width="6.800" height="15.600" fill="#474747"/><rect x="31.900" y="12.600" width="4.300" height="13" fill="#6e6e6e"/><circle cx="34.100" cy="30.900" r="3.500" fill="#474747"/><circle cx="34.100" cy="30.900" r="2.300" fill="#6e6e6e"/></svg>
<div class="t" style="left:1848.5px;top:886px;font-size:21.5px;color:#a2a2a2;letter-spacing:1.050px;">要使用 Creative Cloud Libraries，</div>
<div class="t" style="left:1898.5px;top:916.5px;font-size:21.5px;color:#a2a2a2;letter-spacing:1px;">请登录到 Creative Cloud</div>
<div style="left:1782px;top:1011px;width:483px;height:1.5px;background:#5a5a5a;"></div>
<svg style="left:2166px;top:1023.7px;overflow:visible;" width="32.3" height="24.5" viewBox="0 0 42 31.200" preserveAspectRatio="none"><g fill="#e0e0e0"><circle cx="13.200" cy="18" r="13.200"/><circle cx="28" cy="14.200" r="14"/><ellipse cx="27" cy="20" rx="13" ry="11.200"/><rect x="13.200" y="18" width="13.800" height="13.200"/></g><g fill="none" stroke="#474747" stroke-width="3.5" stroke-linecap="round" stroke-linejoin="round"><path d="M20.400 7.930A9.900 11 0 1 1 23.800 24.970L13.500 17.100"/><path d="M23.300 15.600L16.800 9.970A8.800 8.800 0 1 0 16.800 26.030"/></g></svg>
<svg style="left:2218px;top:1021.5px;" width="22" height="28" viewBox="0 0 22 28"><path d="M7 4.500V2.500A1.500 1.500 0 0 1 8.500 1H13.500A1.500 1.500 0 0 1 15 2.500V4.500" fill="none" stroke="#9a9a9a" stroke-width="1.800"/><path d="M0.500 8.500C0.500 5.500 4 4 11 4S21.500 5.500 21.500 8.500Z" fill="#9a9a9a"/><rect x="2.2" y="10.500" width="2.200" height="15" fill="#9a9a9a"/><rect x="6.05" y="10.500" width="2.200" height="15" fill="#9a9a9a"/><rect x="9.9" y="10.500" width="2.200" height="15" fill="#9a9a9a"/><rect x="13.75" y="10.500" width="2.200" height="15" fill="#9a9a9a"/><rect x="17.6" y="10.500" width="2.200" height="15" fill="#9a9a9a"/><path d="M2.200 24V25A2 2 0 0 0 4.200 27H17.800A2 2 0 0 0 19.800 25V24Z" fill="#9a9a9a"/></svg>
<div style="left:1782px;top:1058px;width:483px;height:17px;background:#3a3a3a;border-top:1.500px solid #1e1e1e;"></div>
<svg style="left:2004.5px;top:1062px;" width="40" height="9" viewBox="0 0 40 9"><rect x="0" y="0" width="1.900" height="8.500" fill="#0f0f0f"/><rect x="3.45" y="0" width="1.900" height="8.500" fill="#0f0f0f"/><rect x="6.9" y="0" width="1.900" height="8.500" fill="#0f0f0f"/><rect x="10.35" y="0" width="1.900" height="8.500" fill="#0f0f0f"/><rect x="13.8" y="0" width="1.900" height="8.500" fill="#0f0f0f"/><rect x="17.25" y="0" width="1.900" height="8.500" fill="#0f0f0f"/><rect x="20.7" y="0" width="1.900" height="8.500" fill="#0f0f0f"/><rect x="24.15" y="0" width="1.900" height="8.500" fill="#0f0f0f"/><rect x="27.6" y="0" width="1.900" height="8.500" fill="#0f0f0f"/><rect x="31.05" y="0" width="1.900" height="8.500" fill="#0f0f0f"/><rect x="34.5" y="0" width="1.900" height="8.500" fill="#0f0f0f"/><rect x="37.95" y="0" width="1.900" height="8.500" fill="#0f0f0f"/></svg>
</div></body></html>
